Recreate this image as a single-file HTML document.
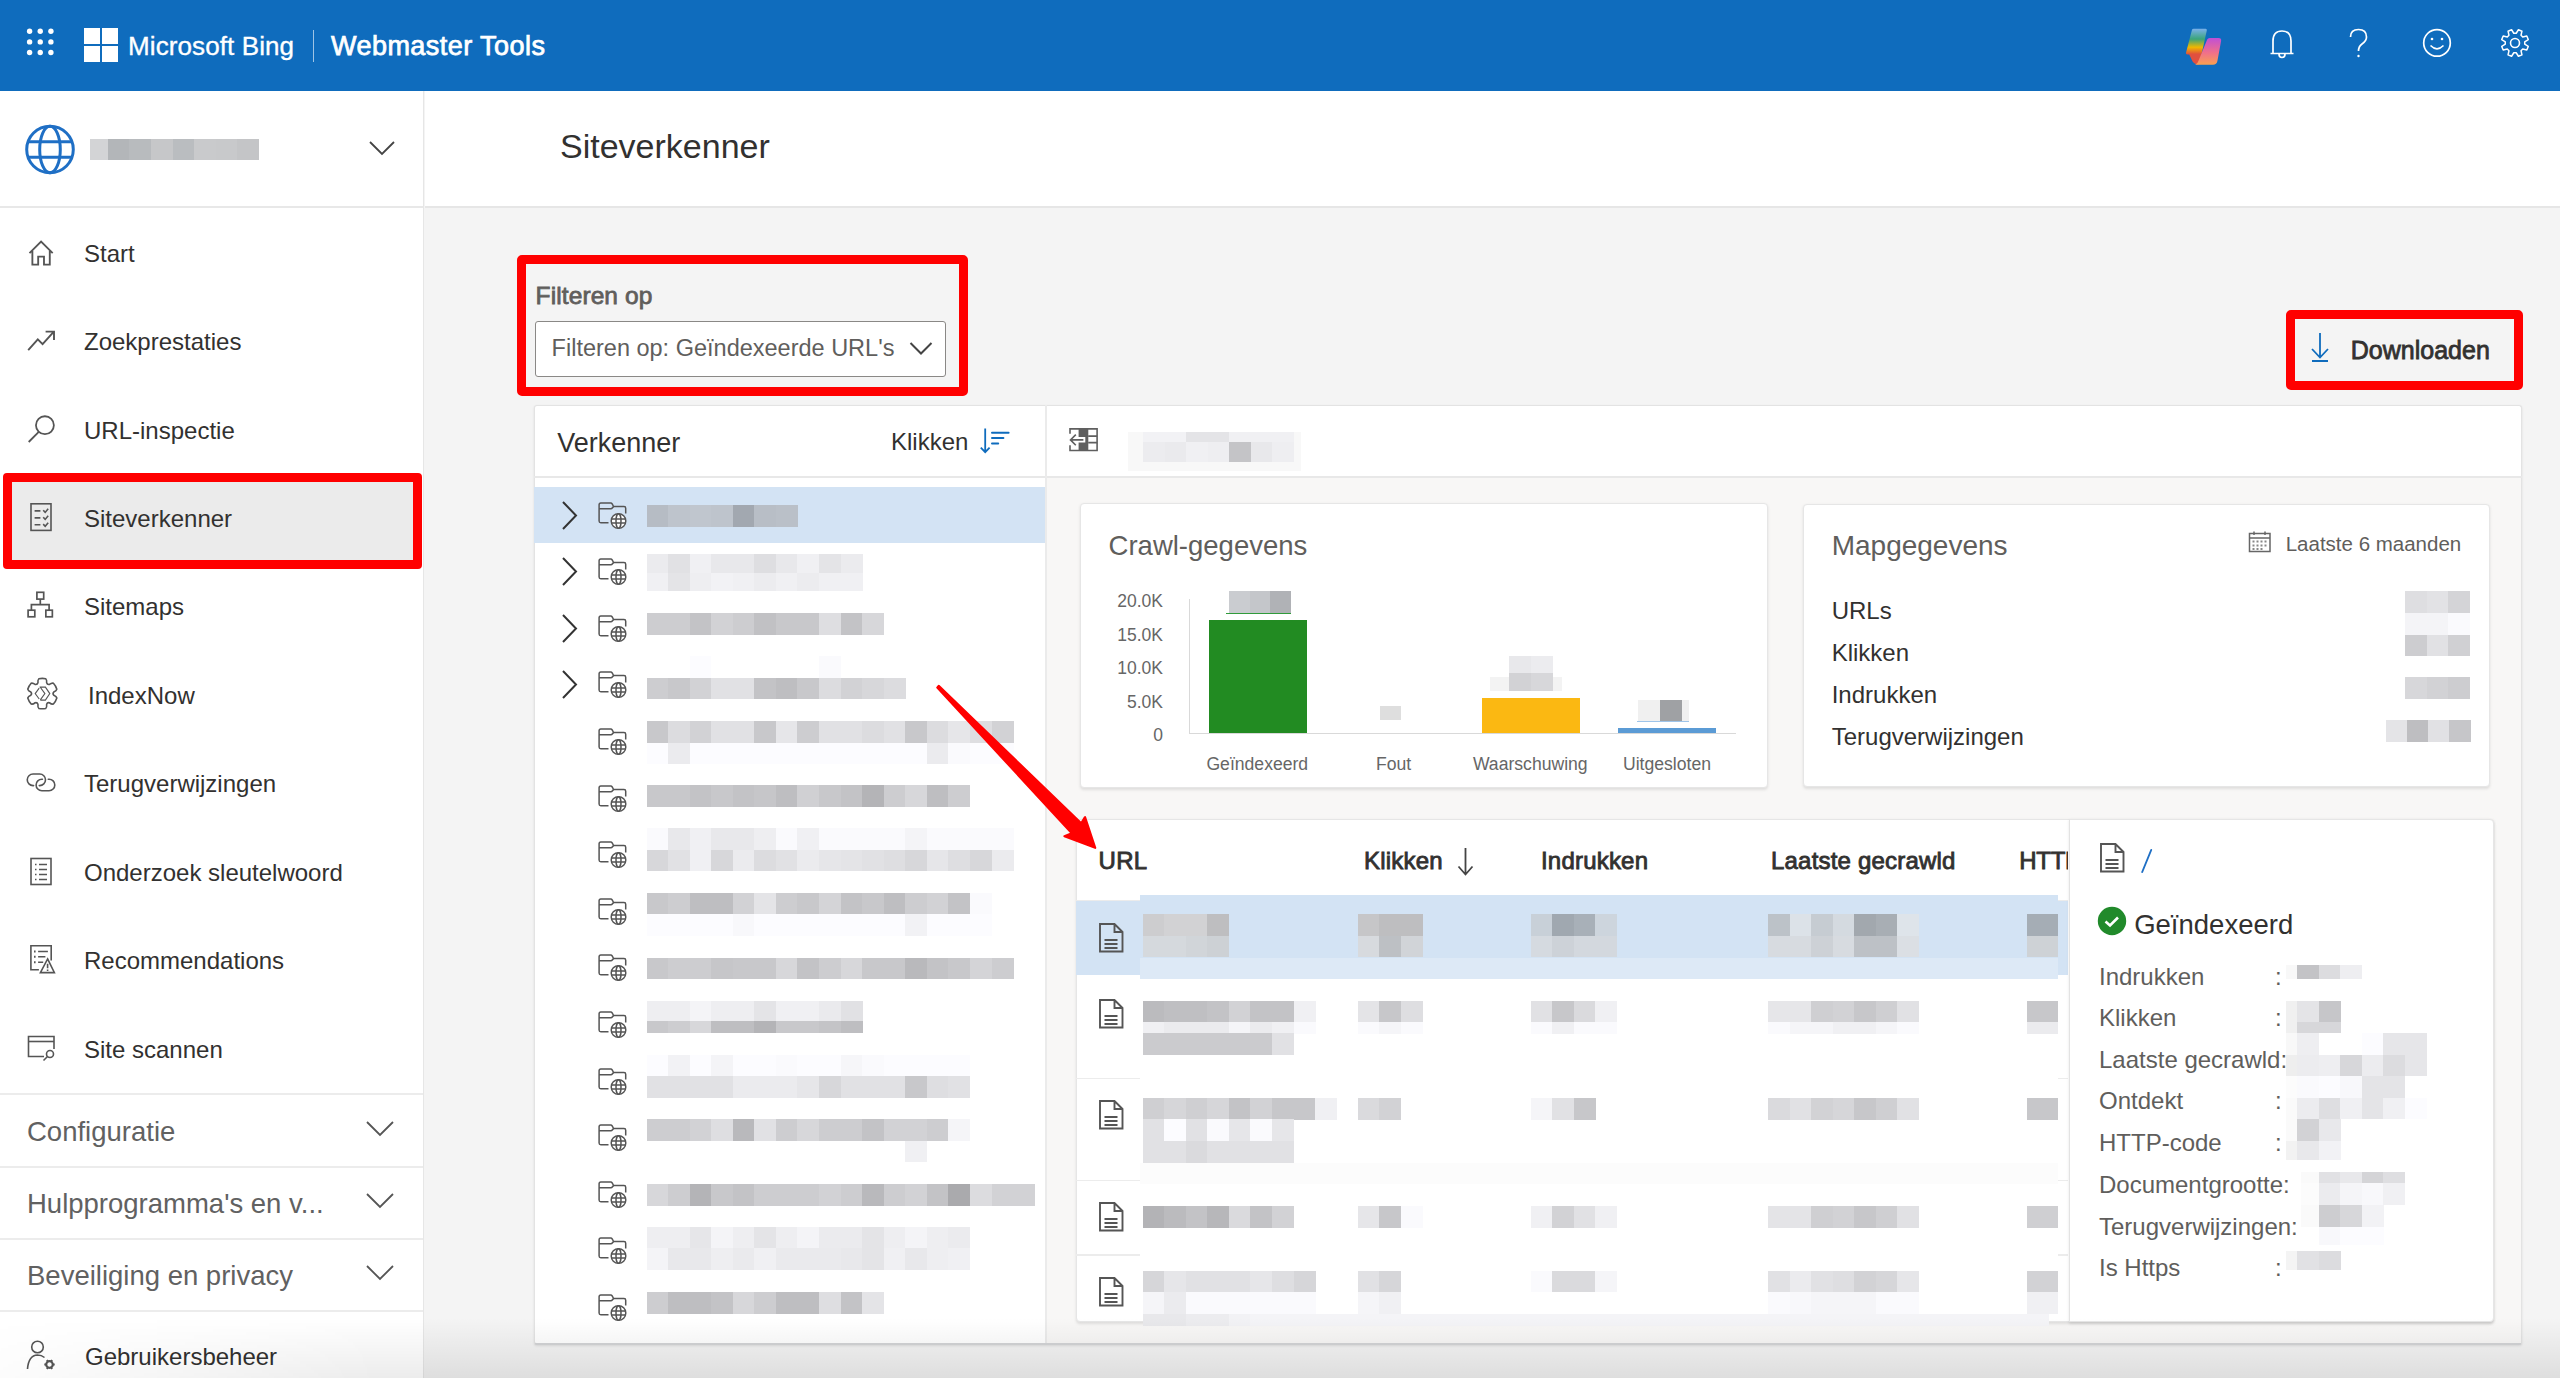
<!DOCTYPE html><html><head><meta charset="utf-8"><style>
html,body{margin:0;padding:0;}
body{width:2560px;height:1378px;overflow:hidden;position:relative;background:#f4f4f4;font-family:"Liberation Sans",sans-serif;}
.t{position:absolute;line-height:1;white-space:nowrap;}
.r{position:absolute;}
svg{position:absolute;overflow:visible;}
</style></head><body>
<div class="r" style="left:0.0px;top:0.0px;width:2560.0px;height:91.0px;background:#0f6cbd;"></div>
<svg style="left:0;top:0" width="80" height="91"><circle cx="29.6" cy="31.25" r="2.7" fill="#fff"/><circle cx="40.25" cy="31.25" r="2.7" fill="#fff"/><circle cx="50.9" cy="31.25" r="2.7" fill="#fff"/><circle cx="29.6" cy="41.9" r="2.7" fill="#fff"/><circle cx="40.25" cy="41.9" r="2.7" fill="#fff"/><circle cx="50.9" cy="41.9" r="2.7" fill="#fff"/><circle cx="29.6" cy="52.5" r="2.7" fill="#fff"/><circle cx="40.25" cy="52.5" r="2.7" fill="#fff"/><circle cx="50.9" cy="52.5" r="2.7" fill="#fff"/></svg>
<div class="r" style="left:84.0px;top:27.8px;width:16.0px;height:16.0px;background:#fff;"></div>
<div class="r" style="left:101.8px;top:27.8px;width:16.0px;height:16.0px;background:#fff;"></div>
<div class="r" style="left:84.0px;top:45.8px;width:16.0px;height:16.0px;background:#fff;"></div>
<div class="r" style="left:101.8px;top:45.8px;width:16.0px;height:16.0px;background:#fff;"></div>
<div class="t" style="left:128px;top:33.4px;font-size:26px;color:#fff;font-weight:400;letter-spacing:0.1px;-webkit-text-stroke:0.35px #fff">Microsoft Bing</div>
<div class="r" style="left:313.2px;top:30.0px;width:1.1px;height:31.5px;background:rgba(255,255,255,0.6);"></div>
<div class="t" style="left:331px;top:32.9px;font-size:27px;color:#fff;font-weight:400;letter-spacing:0.45px;-webkit-text-stroke:0.75px #fff">Webmaster Tools</div>
<svg style="left:2180px;top:24px" width="48" height="46" viewBox="0 0 48 46">
<defs><linearGradient id="cg1" x1="0" y1="0" x2="0" y2="1"><stop offset="0" stop-color="#7ab0ea"/><stop offset="0.4" stop-color="#3aa57a"/><stop offset="0.72" stop-color="#f0b800"/><stop offset="1" stop-color="#e04a3f"/></linearGradient>
<linearGradient id="cg2" x1="0" y1="0" x2="0" y2="1"><stop offset="0" stop-color="#c04fd6"/><stop offset="0.55" stop-color="#f0708a"/><stop offset="1" stop-color="#f8a050"/></linearGradient></defs>
<path d="M12 5.8 Q12.4 4.8 13.6 4.8 H25.6 Q27.2 4.8 26.8 6.4 L21.5 30.5 H7.4 Q5.6 30.5 6 28.7Z" fill="url(#cg1)"/>
<path d="M9 30 H21.6 L18.6 40.8 Q13.5 40.5 11.6 35.5Z" fill="#e0503f"/>
<path d="M27.2 15.6 Q27.9 14 29.6 14 H38.8 Q41.6 14 41.1 17 L37.4 37 Q36.6 40.8 33 40.8 H15.2 Q17.8 39.4 18.6 36.4Z" fill="url(#cg2)"/>
</svg>
<svg style="left:2268px;top:28px" width="28" height="32" viewBox="0 0 28 32"><path d="M5 25 L5 13 Q5 3 14 3 Q23 3 23 13 L23 25 M2.5 25.5 L25.5 25.5 M11 26 Q11 29.5 14 29.5 Q17 29.5 17 26" fill="none" stroke="#fff" stroke-width="1.7"/></svg>
<svg style="left:2346px;top:27px" width="26" height="34" viewBox="0 0 26 34"><path d="M4.5 10 Q4.5 2.5 12.5 2.5 Q20.5 2.5 20.5 10 Q20.5 14 16 17 Q12.5 19.5 12.5 24" fill="none" stroke="#fff" stroke-width="1.7"/><circle cx="12.5" cy="29" r="1.2" fill="#fff"/></svg>
<svg style="left:2420px;top:26px" width="34" height="34" viewBox="0 0 34 34"><circle cx="17" cy="16.9" r="13.3" fill="none" stroke="#fff" stroke-width="1.7"/><circle cx="12" cy="13" r="1.3" fill="#fff"/><circle cx="22" cy="13" r="1.3" fill="#fff"/><path d="M10.5 19.5 Q17 26 23.5 19.5" fill="none" stroke="#fff" stroke-width="1.7"/></svg>
<svg style="left:2498px;top:26px" width="34" height="34" viewBox="0 0 34 34"><path d="M26.73 18.20 L30.26 20.43 L28.80 23.96 L24.73 23.03 L23.03 24.73 L23.96 28.80 L20.43 30.26 L18.20 26.73 L15.80 26.73 L13.57 30.26 L10.04 28.80 L10.97 24.73 L9.27 23.03 L5.20 23.96 L3.74 20.43 L7.27 18.20 L7.27 15.80 L3.74 13.57 L5.20 10.04 L9.27 10.97 L10.97 9.27 L10.04 5.20 L13.57 3.74 L15.80 7.27 L18.20 7.27 L20.43 3.74 L23.96 5.20 L23.03 9.27 L24.73 10.97 L28.80 10.04 L30.26 13.57 L26.73 15.80Z" fill="none" stroke="#fff" stroke-width="1.5" stroke-linejoin="round"/><circle cx="17" cy="17" r="4.5" fill="none" stroke="#fff" stroke-width="1.6"/></svg>
<div class="r" style="left:0.0px;top:91.0px;width:423.0px;height:1287.0px;background:#ffffff;"></div>
<div class="r" style="left:423.0px;top:91.0px;width:1.2px;height:1287.0px;background:#e6e6e6;"></div>
<div class="r" style="left:0.0px;top:206.0px;width:423.0px;height:2.0px;background:#e8e8e8;"></div>
<svg style="left:22px;top:122px" width="56" height="56" viewBox="0 0 56 56"><g fill="none" stroke="#1f6fc5" stroke-width="3"><circle cx="28" cy="27.5" r="23.3"/><ellipse cx="28" cy="27.5" rx="10.3" ry="23.3"/><path d="M6.5 19.8 H49.5 M6.5 35.2 H49.5"/></g></svg>
<div class="r" style="left:90.2px;top:138.6px;width:18.1px;height:21.2px;background:#d3d4d6;"></div>
<div class="r" style="left:108.0px;top:138.6px;width:21.5px;height:21.2px;background:#b3b6b9;"></div>
<div class="r" style="left:129.2px;top:138.6px;width:21.8px;height:21.2px;background:#b8bbbe;"></div>
<div class="r" style="left:150.7px;top:138.6px;width:22.2px;height:21.2px;background:#c6c7c9;"></div>
<div class="r" style="left:172.6px;top:138.6px;width:21.4px;height:21.2px;background:#babdc0;"></div>
<div class="r" style="left:193.7px;top:138.6px;width:22.1px;height:21.2px;background:#c9cacc;"></div>
<div class="r" style="left:215.5px;top:138.6px;width:21.8px;height:21.2px;background:#c8c9cb;"></div>
<div class="r" style="left:237.0px;top:138.6px;width:22.2px;height:21.2px;background:#c4c5c7;"></div>
<svg style="left:368px;top:140px" width="28" height="18" viewBox="0 0 28 18"><path d="M2 2 L14 14 L26 2" fill="none" stroke="#444" stroke-width="1.8"/></svg>
<div class="r" style="left:8.0px;top:479.0px;width:408.0px;height:83.0px;background:#ebebeb;"></div>
<div class="r" style="left:3.0px;top:473.0px;width:419.0px;height:95.5px;background:transparent;border:9.5px solid #ff0000;box-sizing:border-box;border-radius:4px"></div>
<div class="t" style="left:84px;top:242.0px;font-size:24px;color:#323130;font-weight:400;">Start</div>
<div class="t" style="left:84px;top:330.2px;font-size:24px;color:#323130;font-weight:400;">Zoekprestaties</div>
<div class="t" style="left:84px;top:418.5px;font-size:24px;color:#323130;font-weight:400;">URL-inspectie</div>
<div class="t" style="left:84px;top:506.7px;font-size:24px;color:#323130;font-weight:400;">Siteverkenner</div>
<div class="t" style="left:84px;top:595.0px;font-size:24px;color:#323130;font-weight:400;">Sitemaps</div>
<div class="t" style="left:88px;top:683.6px;font-size:24px;color:#323130;font-weight:400;">IndexNow</div>
<div class="t" style="left:84px;top:772.1px;font-size:24px;color:#323130;font-weight:400;">Terugverwijzingen</div>
<div class="t" style="left:84px;top:860.7px;font-size:24px;color:#323130;font-weight:400;">Onderzoek sleutelwoord</div>
<div class="t" style="left:84px;top:949.2px;font-size:24px;color:#323130;font-weight:400;">Recommendations</div>
<div class="t" style="left:84px;top:1037.7px;font-size:24px;color:#323130;font-weight:400;">Site scannen</div>
<svg style="left:20px;top:765px" width="50" height="40" viewBox="0 0 50 40"><g fill="none" stroke="#555" stroke-width="1.6" stroke-linecap="round"><path d="M13.6 20.6 H13.05 A5.8 5.8 0 0 1 13.05 9 H19.7 A5.8 5.8 0 0 1 19.7 20.6 H19.3"/><path d="M22.4 14.2 H21.85 A5.75 5.75 0 0 0 21.85 25.7 H29.05 A5.75 5.75 0 0 0 29.05 14.2 H28.3"/></g></svg>
<svg style="left:20px;top:585px" width="50" height="40" viewBox="0 0 50 40"><g fill="none" stroke="#555" stroke-width="1.7"><rect x="16.9" y="7.3" width="6.8" height="6.8"/><rect x="8.1" y="25.2" width="6.7" height="6.6"/><rect x="25.85" y="25.2" width="6.5" height="6.6"/><path d="M20.3 14.1 V19.6 M11.4 25.2 V19.6 H29.1 V25.2"/></g></svg>
<svg style="left:20px;top:670px" width="50" height="50" viewBox="0 0 50 50"><path d="M17.95 12.84 Q17.61 9.98 18.88 8.79 Q22.30 8.00 25.72 8.79 Q26.99 9.98 26.65 12.84 Q27.30 14.94 29.44 14.46 Q31.75 12.73 33.42 13.23 Q35.81 15.80 36.84 19.16 Q36.44 20.85 33.79 21.99 Q32.30 23.60 33.79 25.21 Q36.44 26.35 36.84 28.04 Q35.81 31.40 33.42 33.97 Q31.75 34.47 29.44 32.74 Q27.30 32.26 26.65 34.36 Q26.99 37.22 25.72 38.41 Q22.30 39.20 18.88 38.41 Q17.61 37.22 17.95 34.36 Q17.30 32.26 15.16 32.74 Q12.85 34.47 11.18 33.97 Q8.79 31.40 7.76 28.04 Q8.16 26.35 10.81 25.21 Q12.30 23.60 10.81 21.99 Q8.16 20.85 7.76 19.16 Q8.79 15.80 11.18 13.23 Q12.85 12.73 15.16 14.46 Q17.30 14.94 17.95 12.84 Z" fill="none" stroke="#555" stroke-width="1.6"/><path d="M19.6 17.1 H25.4 L29.8 23.6 L25.4 30.1 H20.3 M20.3 17.3 L24.9 23.6 L20.3 29.9 M19.2 18.2 L15.2 23.6 L19.2 29" fill="none" stroke="#555" stroke-width="1.1"/></svg>
<svg style="left:25.5px;top:237.5px" width="34" height="34" viewBox="0 0 34 34"><g transform="scale(1.16)"><path d="M3 13 L13 3 L23 13 M5.5 10.5 V23 H10.5 V16 H15.5 V23 H20.5 V10.5" fill="none" stroke="#555" stroke-width="1.6"/></g></svg>
<svg style="left:27px;top:324.5px" width="34" height="34" viewBox="0 0 34 34"><g transform="scale(1.2)"><path d="M1 21 L9 12 L13 16 L22 6 M15.5 5.5 H22.5 V12.5" fill="none" stroke="#555" stroke-width="1.6"/></g></svg>
<svg style="left:26.5px;top:413.5px" width="34" height="34" viewBox="0 0 34 34"><g transform="scale(1.12)"><circle cx="16" cy="10" r="8" fill="none" stroke="#555" stroke-width="1.6"/><path d="M10.5 16 L1.5 25" fill="none" stroke="#555" stroke-width="1.6"/></g></svg>
<svg style="left:28px;top:501px" width="34" height="34" viewBox="0 0 34 34"><g transform="scale(1.0)"><rect x="3" y="2.8" width="20" height="26.6" fill="none" stroke="#555" stroke-width="1.6"/><path d="M6.6 9.9 H12.4 M6.6 16.9 H12.4 M6.6 23.8 H12.4 M15.2 9.2 l2 2.2 l3 -3.6 M15.2 16.2 l2 2.2 l3 -3.6 M15.2 23.1 l2 2.2 l3 -3.6" fill="none" stroke="#555" stroke-width="1.6"/></g></svg>
<svg style="left:28px;top:857px" width="34" height="34" viewBox="0 0 34 34"><g transform="scale(1.0)"><rect x="3" y="1.5" width="20" height="26" fill="none" stroke="#555" stroke-width="1.6"/><path d="M7 7.5 H8.5 M11 7.5 H19 M7 12.5 H8.5 M11 12.5 H19 M7 17.5 H8.5 M11 17.5 H19 M7 22.5 H8.5 M11 22.5 H19" fill="none" stroke="#555" stroke-width="1.6"/></g></svg>
<svg style="left:28px;top:945px" width="34" height="34" viewBox="0 0 34 34"><g transform="scale(1.0)"><path d="M10.9 24.8 H2.9 V0.8 H23.2 V15.4" fill="none" stroke="#555" stroke-width="1.6"/><path d="M10.1 6.5 H19.9 M10.1 11.8 H17.4 M10.1 17.2 H15.2" fill="none" stroke="#555" stroke-width="1.6"/><path d="M6 6.5 H7.6 M6 11.8 H7.6 M6 17.2 H7.6" stroke="#555" stroke-width="2"/><path d="M19.6 13.9 L26.4 27.6 H12.4Z" fill="none" stroke="#555" stroke-width="1.6"/><path d="M19.6 18.8 V23.2 M19.6 24.6 V26" fill="none" stroke="#555" stroke-width="1.6"/></g></svg>
<svg style="left:26.8px;top:1034.6px" width="34" height="34" viewBox="0 0 34 34"><g transform="scale(1.0)"><path d="M17 21.5 H1.5 V1.5 H27 V14" fill="none" stroke="#555" stroke-width="1.6"/><path d="M1.5 6.5 H27" fill="none" stroke="#555" stroke-width="1.6"/><circle cx="23" cy="19" r="3.5" fill="none" stroke="#555" stroke-width="1.6"/><path d="M20.5 21.5 L16.5 25.5" fill="none" stroke="#555" stroke-width="1.6"/></g></svg>
<div class="r" style="left:0.0px;top:1093.0px;width:423.0px;height:2.0px;background:#ececec;"></div>
<div class="r" style="left:0.0px;top:1165.6px;width:423.0px;height:2.0px;background:#ececec;"></div>
<div class="r" style="left:0.0px;top:1237.8px;width:423.0px;height:2.0px;background:#ececec;"></div>
<div class="r" style="left:0.0px;top:1310.0px;width:423.0px;height:2.0px;background:#ececec;"></div>
<div class="t" style="left:27px;top:1117.7px;font-size:27.5px;color:#616161;font-weight:400;">Configuratie</div>
<div class="t" style="left:27px;top:1190.1px;font-size:27.5px;color:#616161;font-weight:400;">Hulpprogramma's en v...</div>
<div class="t" style="left:27px;top:1261.7px;font-size:27.5px;color:#616161;font-weight:400;">Beveiliging en privacy</div>
<svg style="left:364px;top:1120px" width="32" height="20" viewBox="0 0 32 20"><path d="M3 2 L16 15 L29 2" fill="none" stroke="#555" stroke-width="1.8"/></svg>
<svg style="left:364px;top:1192px" width="32" height="20" viewBox="0 0 32 20"><path d="M3 2 L16 15 L29 2" fill="none" stroke="#555" stroke-width="1.8"/></svg>
<svg style="left:364px;top:1264px" width="32" height="20" viewBox="0 0 32 20"><path d="M3 2 L16 15 L29 2" fill="none" stroke="#555" stroke-width="1.8"/></svg>
<div class="t" style="left:85px;top:1345.4px;font-size:24px;color:#323130;font-weight:400;">Gebruikersbeheer</div>
<svg style="left:25px;top:1339px" width="34" height="34" viewBox="0 0 34 34"><circle cx="12.5" cy="8" r="5.8" fill="none" stroke="#555" stroke-width="1.6"/><path d="M2.5 30 Q3.5 16.5 12.5 16 Q16.5 16 19.5 18.5" fill="none" stroke="#555" stroke-width="1.6"/><circle cx="24.5" cy="25.5" r="3.3" fill="none" stroke="#555" stroke-width="2.2"/><path d="M27.10 25.50 L29.70 25.50 M25.80 27.75 L27.10 30.00 M23.20 27.75 L21.90 30.00 M21.90 25.50 L19.30 25.50 M23.20 23.25 L21.90 21.00 M25.80 23.25 L27.10 21.00 " stroke="#555" stroke-width="1.8"/></svg>
<div class="r" style="left:424.5px;top:91.0px;width:2135.5px;height:116.0px;background:#ffffff;"></div>
<div class="r" style="left:424.5px;top:206.0px;width:2135.5px;height:2.0px;background:#e6e6e6;"></div>
<div class="t" style="left:560px;top:129.2px;font-size:34px;color:#323130;font-weight:400;">Siteverkenner</div>
<div class="r" style="left:517.2px;top:255.4px;width:450.5px;height:140.2px;background:transparent;border:9.5px solid #ff0000;box-sizing:border-box;border-radius:5px"></div>
<div class="t" style="left:535.6px;top:284.3px;font-size:24.5px;color:#605e5c;font-weight:400;letter-spacing:0.1px;-webkit-text-stroke:0.8px #605e5c">Filteren op</div>
<div class="r" style="left:534.7px;top:320.6px;width:411.2px;height:56.0px;background:#fff;border:1px solid #8a8886;box-sizing:border-box;border-radius:3px"></div>
<div class="t" style="left:551.6px;top:337.3px;font-size:23.5px;color:#605e5c;font-weight:400;">Filteren op: Geïndexeerde URL's</div>
<svg style="left:906px;top:338px" width="30" height="20" viewBox="0 0 30 20"><path d="M4.5 5 L15 15.5 L25.5 5" fill="none" stroke="#444" stroke-width="2"/></svg>
<div class="r" style="left:2286.0px;top:309.5px;width:237.0px;height:80.3px;background:transparent;border:9.2px solid #ff0000;box-sizing:border-box;border-radius:5px"></div>
<svg style="left:2308px;top:330px" width="26" height="36" viewBox="0 0 26 36"><path d="M12 3 V27 M4 19 L12 27.5 L20 19" fill="none" stroke="#0f6cbd" stroke-width="1.8"/><path d="M4 31 H20" stroke="#0f6cbd" stroke-width="2"/></svg>
<div class="t" style="left:2350.8px;top:338.1px;font-size:25px;color:#323130;font-weight:400;-webkit-text-stroke:0.8px #323130">Downloaden</div>
<div class="r" style="left:534.0px;top:404.5px;width:1988.0px;height:940.0px;background:#ffffff;border:1px solid #e3e3e3;border-bottom:2px solid #d3d4d6;box-sizing:border-box;box-shadow:0 1px 2.5px rgba(0,0,0,0.10);border-radius:3px"></div>
<div class="t" style="left:557.2px;top:429.9px;font-size:27px;color:#323130;font-weight:400;">Verkenner</div>
<div class="t" style="left:891px;top:429.7px;font-size:24px;color:#323130;font-weight:400;">Klikken</div>
<svg style="left:970px;top:420px" width="50" height="40" viewBox="0 0 50 40"><path d="M15.2 8.4 V32 M10.8 27.6 L15.2 32.2 L19.6 27.6" fill="none" stroke="#0f6cbd" stroke-width="1.8"/><path d="M22 12.8 H38.6 M22 18 H33.4 M22 23.4 H28.2" stroke="#0f6cbd" stroke-width="2" stroke-linecap="round"/></svg>
<div class="r" style="left:534.0px;top:476.0px;width:512.0px;height:2.0px;background:#e8e8e8;"></div>
<div class="r" style="left:1045.2px;top:405.0px;width:2.2px;height:937.5px;background:#ebebeb;"></div>
<div class="r" style="left:534.0px;top:486.6px;width:511.0px;height:56.2px;background:#d3e3f4;"></div>
<svg style="left:560px;top:499.5px" width="20" height="32" viewBox="0 0 20 32"><path d="M3 2 L16 15.5 L3 29" fill="none" stroke="#333" stroke-width="2"/></svg>
<svg style="left:598px;top:500.5px" width="34" height="34" viewBox="0 0 34 34"><g fill="none" stroke="#555" stroke-width="1.5"><path d="M10.5 21.7 H2.8 Q1.1 21.7 1.1 20 V3.8 Q1.1 2.1 2.8 2.1 H12.8 Q13.6 2.1 14.2 3 L15.6 5.5 H26 Q27.7 5.5 27.7 7.2 V12.6"/><path d="M1.1 7.7 H12.8 Q13.8 7.7 14.5 6.8 L15.6 5.5"/><circle cx="20.5" cy="20" r="7.3" fill="#fff"/><ellipse cx="20.5" cy="20" rx="2.5" ry="7.3"/><path d="M13.4 18.1 H27.6 M13.4 21.9 H27.6"/></g></svg>
<svg style="left:560px;top:556.1px" width="20" height="32" viewBox="0 0 20 32"><path d="M3 2 L16 15.5 L3 29" fill="none" stroke="#333" stroke-width="2"/></svg>
<svg style="left:598px;top:557.1px" width="34" height="34" viewBox="0 0 34 34"><g fill="none" stroke="#555" stroke-width="1.5"><path d="M10.5 21.7 H2.8 Q1.1 21.7 1.1 20 V3.8 Q1.1 2.1 2.8 2.1 H12.8 Q13.6 2.1 14.2 3 L15.6 5.5 H26 Q27.7 5.5 27.7 7.2 V12.6"/><path d="M1.1 7.7 H12.8 Q13.8 7.7 14.5 6.8 L15.6 5.5"/><circle cx="20.5" cy="20" r="7.3" fill="#fff"/><ellipse cx="20.5" cy="20" rx="2.5" ry="7.3"/><path d="M13.4 18.1 H27.6 M13.4 21.9 H27.6"/></g></svg>
<svg style="left:560px;top:612.7px" width="20" height="32" viewBox="0 0 20 32"><path d="M3 2 L16 15.5 L3 29" fill="none" stroke="#333" stroke-width="2"/></svg>
<svg style="left:598px;top:613.7px" width="34" height="34" viewBox="0 0 34 34"><g fill="none" stroke="#555" stroke-width="1.5"><path d="M10.5 21.7 H2.8 Q1.1 21.7 1.1 20 V3.8 Q1.1 2.1 2.8 2.1 H12.8 Q13.6 2.1 14.2 3 L15.6 5.5 H26 Q27.7 5.5 27.7 7.2 V12.6"/><path d="M1.1 7.7 H12.8 Q13.8 7.7 14.5 6.8 L15.6 5.5"/><circle cx="20.5" cy="20" r="7.3" fill="#fff"/><ellipse cx="20.5" cy="20" rx="2.5" ry="7.3"/><path d="M13.4 18.1 H27.6 M13.4 21.9 H27.6"/></g></svg>
<svg style="left:560px;top:669.3px" width="20" height="32" viewBox="0 0 20 32"><path d="M3 2 L16 15.5 L3 29" fill="none" stroke="#333" stroke-width="2"/></svg>
<svg style="left:598px;top:670.3px" width="34" height="34" viewBox="0 0 34 34"><g fill="none" stroke="#555" stroke-width="1.5"><path d="M10.5 21.7 H2.8 Q1.1 21.7 1.1 20 V3.8 Q1.1 2.1 2.8 2.1 H12.8 Q13.6 2.1 14.2 3 L15.6 5.5 H26 Q27.7 5.5 27.7 7.2 V12.6"/><path d="M1.1 7.7 H12.8 Q13.8 7.7 14.5 6.8 L15.6 5.5"/><circle cx="20.5" cy="20" r="7.3" fill="#fff"/><ellipse cx="20.5" cy="20" rx="2.5" ry="7.3"/><path d="M13.4 18.1 H27.6 M13.4 21.9 H27.6"/></g></svg>
<svg style="left:598px;top:726.9px" width="34" height="34" viewBox="0 0 34 34"><g fill="none" stroke="#555" stroke-width="1.5"><path d="M10.5 21.7 H2.8 Q1.1 21.7 1.1 20 V3.8 Q1.1 2.1 2.8 2.1 H12.8 Q13.6 2.1 14.2 3 L15.6 5.5 H26 Q27.7 5.5 27.7 7.2 V12.6"/><path d="M1.1 7.7 H12.8 Q13.8 7.7 14.5 6.8 L15.6 5.5"/><circle cx="20.5" cy="20" r="7.3" fill="#fff"/><ellipse cx="20.5" cy="20" rx="2.5" ry="7.3"/><path d="M13.4 18.1 H27.6 M13.4 21.9 H27.6"/></g></svg>
<svg style="left:598px;top:783.5px" width="34" height="34" viewBox="0 0 34 34"><g fill="none" stroke="#555" stroke-width="1.5"><path d="M10.5 21.7 H2.8 Q1.1 21.7 1.1 20 V3.8 Q1.1 2.1 2.8 2.1 H12.8 Q13.6 2.1 14.2 3 L15.6 5.5 H26 Q27.7 5.5 27.7 7.2 V12.6"/><path d="M1.1 7.7 H12.8 Q13.8 7.7 14.5 6.8 L15.6 5.5"/><circle cx="20.5" cy="20" r="7.3" fill="#fff"/><ellipse cx="20.5" cy="20" rx="2.5" ry="7.3"/><path d="M13.4 18.1 H27.6 M13.4 21.9 H27.6"/></g></svg>
<svg style="left:598px;top:840.1px" width="34" height="34" viewBox="0 0 34 34"><g fill="none" stroke="#555" stroke-width="1.5"><path d="M10.5 21.7 H2.8 Q1.1 21.7 1.1 20 V3.8 Q1.1 2.1 2.8 2.1 H12.8 Q13.6 2.1 14.2 3 L15.6 5.5 H26 Q27.7 5.5 27.7 7.2 V12.6"/><path d="M1.1 7.7 H12.8 Q13.8 7.7 14.5 6.8 L15.6 5.5"/><circle cx="20.5" cy="20" r="7.3" fill="#fff"/><ellipse cx="20.5" cy="20" rx="2.5" ry="7.3"/><path d="M13.4 18.1 H27.6 M13.4 21.9 H27.6"/></g></svg>
<svg style="left:598px;top:896.7px" width="34" height="34" viewBox="0 0 34 34"><g fill="none" stroke="#555" stroke-width="1.5"><path d="M10.5 21.7 H2.8 Q1.1 21.7 1.1 20 V3.8 Q1.1 2.1 2.8 2.1 H12.8 Q13.6 2.1 14.2 3 L15.6 5.5 H26 Q27.7 5.5 27.7 7.2 V12.6"/><path d="M1.1 7.7 H12.8 Q13.8 7.7 14.5 6.8 L15.6 5.5"/><circle cx="20.5" cy="20" r="7.3" fill="#fff"/><ellipse cx="20.5" cy="20" rx="2.5" ry="7.3"/><path d="M13.4 18.1 H27.6 M13.4 21.9 H27.6"/></g></svg>
<svg style="left:598px;top:953.3px" width="34" height="34" viewBox="0 0 34 34"><g fill="none" stroke="#555" stroke-width="1.5"><path d="M10.5 21.7 H2.8 Q1.1 21.7 1.1 20 V3.8 Q1.1 2.1 2.8 2.1 H12.8 Q13.6 2.1 14.2 3 L15.6 5.5 H26 Q27.7 5.5 27.7 7.2 V12.6"/><path d="M1.1 7.7 H12.8 Q13.8 7.7 14.5 6.8 L15.6 5.5"/><circle cx="20.5" cy="20" r="7.3" fill="#fff"/><ellipse cx="20.5" cy="20" rx="2.5" ry="7.3"/><path d="M13.4 18.1 H27.6 M13.4 21.9 H27.6"/></g></svg>
<svg style="left:598px;top:1009.9000000000001px" width="34" height="34" viewBox="0 0 34 34"><g fill="none" stroke="#555" stroke-width="1.5"><path d="M10.5 21.7 H2.8 Q1.1 21.7 1.1 20 V3.8 Q1.1 2.1 2.8 2.1 H12.8 Q13.6 2.1 14.2 3 L15.6 5.5 H26 Q27.7 5.5 27.7 7.2 V12.6"/><path d="M1.1 7.7 H12.8 Q13.8 7.7 14.5 6.8 L15.6 5.5"/><circle cx="20.5" cy="20" r="7.3" fill="#fff"/><ellipse cx="20.5" cy="20" rx="2.5" ry="7.3"/><path d="M13.4 18.1 H27.6 M13.4 21.9 H27.6"/></g></svg>
<svg style="left:598px;top:1066.5px" width="34" height="34" viewBox="0 0 34 34"><g fill="none" stroke="#555" stroke-width="1.5"><path d="M10.5 21.7 H2.8 Q1.1 21.7 1.1 20 V3.8 Q1.1 2.1 2.8 2.1 H12.8 Q13.6 2.1 14.2 3 L15.6 5.5 H26 Q27.7 5.5 27.7 7.2 V12.6"/><path d="M1.1 7.7 H12.8 Q13.8 7.7 14.5 6.8 L15.6 5.5"/><circle cx="20.5" cy="20" r="7.3" fill="#fff"/><ellipse cx="20.5" cy="20" rx="2.5" ry="7.3"/><path d="M13.4 18.1 H27.6 M13.4 21.9 H27.6"/></g></svg>
<svg style="left:598px;top:1123.1px" width="34" height="34" viewBox="0 0 34 34"><g fill="none" stroke="#555" stroke-width="1.5"><path d="M10.5 21.7 H2.8 Q1.1 21.7 1.1 20 V3.8 Q1.1 2.1 2.8 2.1 H12.8 Q13.6 2.1 14.2 3 L15.6 5.5 H26 Q27.7 5.5 27.7 7.2 V12.6"/><path d="M1.1 7.7 H12.8 Q13.8 7.7 14.5 6.8 L15.6 5.5"/><circle cx="20.5" cy="20" r="7.3" fill="#fff"/><ellipse cx="20.5" cy="20" rx="2.5" ry="7.3"/><path d="M13.4 18.1 H27.6 M13.4 21.9 H27.6"/></g></svg>
<svg style="left:598px;top:1179.7px" width="34" height="34" viewBox="0 0 34 34"><g fill="none" stroke="#555" stroke-width="1.5"><path d="M10.5 21.7 H2.8 Q1.1 21.7 1.1 20 V3.8 Q1.1 2.1 2.8 2.1 H12.8 Q13.6 2.1 14.2 3 L15.6 5.5 H26 Q27.7 5.5 27.7 7.2 V12.6"/><path d="M1.1 7.7 H12.8 Q13.8 7.7 14.5 6.8 L15.6 5.5"/><circle cx="20.5" cy="20" r="7.3" fill="#fff"/><ellipse cx="20.5" cy="20" rx="2.5" ry="7.3"/><path d="M13.4 18.1 H27.6 M13.4 21.9 H27.6"/></g></svg>
<svg style="left:598px;top:1236.3000000000002px" width="34" height="34" viewBox="0 0 34 34"><g fill="none" stroke="#555" stroke-width="1.5"><path d="M10.5 21.7 H2.8 Q1.1 21.7 1.1 20 V3.8 Q1.1 2.1 2.8 2.1 H12.8 Q13.6 2.1 14.2 3 L15.6 5.5 H26 Q27.7 5.5 27.7 7.2 V12.6"/><path d="M1.1 7.7 H12.8 Q13.8 7.7 14.5 6.8 L15.6 5.5"/><circle cx="20.5" cy="20" r="7.3" fill="#fff"/><ellipse cx="20.5" cy="20" rx="2.5" ry="7.3"/><path d="M13.4 18.1 H27.6 M13.4 21.9 H27.6"/></g></svg>
<svg style="left:598px;top:1292.9px" width="34" height="34" viewBox="0 0 34 34"><g fill="none" stroke="#555" stroke-width="1.5"><path d="M10.5 21.7 H2.8 Q1.1 21.7 1.1 20 V3.8 Q1.1 2.1 2.8 2.1 H12.8 Q13.6 2.1 14.2 3 L15.6 5.5 H26 Q27.7 5.5 27.7 7.2 V12.6"/><path d="M1.1 7.7 H12.8 Q13.8 7.7 14.5 6.8 L15.6 5.5"/><circle cx="20.5" cy="20" r="7.3" fill="#fff"/><ellipse cx="20.5" cy="20" rx="2.5" ry="7.3"/><path d="M13.4 18.1 H27.6 M13.4 21.9 H27.6"/></g></svg>
<div class="r" style="left:646.5px;top:505.0px;width:22.1px;height:21.9px;background:rgb(182,188,196);"></div>
<div class="r" style="left:668.1px;top:505.0px;width:22.1px;height:21.9px;background:rgb(190,196,204);"></div>
<div class="r" style="left:689.6px;top:505.0px;width:22.1px;height:21.9px;background:rgb(192,198,206);"></div>
<div class="r" style="left:711.2px;top:505.0px;width:22.1px;height:21.9px;background:rgb(190,196,204);"></div>
<div class="r" style="left:732.7px;top:505.0px;width:22.1px;height:21.9px;background:rgb(162,168,176);"></div>
<div class="r" style="left:754.3px;top:505.0px;width:22.1px;height:21.9px;background:rgb(184,190,198);"></div>
<div class="r" style="left:775.9px;top:505.0px;width:22.1px;height:21.9px;background:rgb(186,192,200);"></div>
<div class="r" style="left:646.5px;top:554.0px;width:22.1px;height:18.8px;background:rgb(235,235,238);"></div>
<div class="r" style="left:668.1px;top:554.0px;width:22.1px;height:18.8px;background:rgb(225,225,228);"></div>
<div class="r" style="left:689.6px;top:554.0px;width:22.1px;height:18.8px;background:rgb(240,240,243);"></div>
<div class="r" style="left:711.2px;top:554.0px;width:22.1px;height:18.8px;background:rgb(232,232,235);"></div>
<div class="r" style="left:732.7px;top:554.0px;width:22.1px;height:18.8px;background:rgb(232,232,235);"></div>
<div class="r" style="left:754.3px;top:554.0px;width:22.1px;height:18.8px;background:rgb(222,222,225);"></div>
<div class="r" style="left:775.9px;top:554.0px;width:22.1px;height:18.8px;background:rgb(232,232,235);"></div>
<div class="r" style="left:797.4px;top:554.0px;width:22.1px;height:18.8px;background:rgb(240,240,243);"></div>
<div class="r" style="left:819.0px;top:554.0px;width:22.1px;height:18.8px;background:rgb(228,228,231);"></div>
<div class="r" style="left:840.5px;top:554.0px;width:22.1px;height:18.8px;background:rgb(235,235,238);"></div>
<div class="r" style="left:646.5px;top:572.5px;width:22.1px;height:18.8px;background:rgb(240,240,243);"></div>
<div class="r" style="left:668.1px;top:572.5px;width:22.1px;height:18.8px;background:rgb(228,228,231);"></div>
<div class="r" style="left:689.6px;top:572.5px;width:22.1px;height:18.8px;background:rgb(238,238,241);"></div>
<div class="r" style="left:711.2px;top:572.5px;width:22.1px;height:18.8px;background:rgb(242,242,245);"></div>
<div class="r" style="left:732.7px;top:572.5px;width:22.1px;height:18.8px;background:rgb(240,240,243);"></div>
<div class="r" style="left:754.3px;top:572.5px;width:22.1px;height:18.8px;background:rgb(236,236,239);"></div>
<div class="r" style="left:775.9px;top:572.5px;width:22.1px;height:18.8px;background:rgb(240,240,243);"></div>
<div class="r" style="left:797.4px;top:572.5px;width:22.1px;height:18.8px;background:rgb(236,236,239);"></div>
<div class="r" style="left:819.0px;top:572.5px;width:22.1px;height:18.8px;background:rgb(240,240,243);"></div>
<div class="r" style="left:840.5px;top:572.5px;width:22.1px;height:18.8px;background:rgb(240,240,243);"></div>
<div class="r" style="left:646.5px;top:613.0px;width:22.1px;height:21.9px;background:rgb(205,205,208);"></div>
<div class="r" style="left:668.1px;top:613.0px;width:22.1px;height:21.9px;background:rgb(205,205,208);"></div>
<div class="r" style="left:689.6px;top:613.0px;width:22.1px;height:21.9px;background:rgb(195,195,198);"></div>
<div class="r" style="left:711.2px;top:613.0px;width:22.1px;height:21.9px;background:rgb(210,210,213);"></div>
<div class="r" style="left:732.7px;top:613.0px;width:22.1px;height:21.9px;background:rgb(205,205,208);"></div>
<div class="r" style="left:754.3px;top:613.0px;width:22.1px;height:21.9px;background:rgb(193,193,196);"></div>
<div class="r" style="left:775.9px;top:613.0px;width:22.1px;height:21.9px;background:rgb(200,200,203);"></div>
<div class="r" style="left:797.4px;top:613.0px;width:22.1px;height:21.9px;background:rgb(200,200,203);"></div>
<div class="r" style="left:819.0px;top:613.0px;width:22.1px;height:21.9px;background:rgb(222,222,225);"></div>
<div class="r" style="left:840.5px;top:613.0px;width:22.1px;height:21.9px;background:rgb(195,195,198);"></div>
<div class="r" style="left:862.1px;top:613.0px;width:22.1px;height:21.9px;background:rgb(215,215,218);"></div>
<div class="r" style="left:646.5px;top:656.2px;width:22.1px;height:21.9px;background:rgb(255,255,255);"></div>
<div class="r" style="left:668.1px;top:656.2px;width:22.1px;height:21.9px;background:rgb(255,255,255);"></div>
<div class="r" style="left:689.6px;top:656.2px;width:22.1px;height:21.9px;background:rgb(252,252,255);"></div>
<div class="r" style="left:711.2px;top:656.2px;width:22.1px;height:21.9px;background:rgb(255,255,255);"></div>
<div class="r" style="left:732.7px;top:656.2px;width:22.1px;height:21.9px;background:rgb(255,255,255);"></div>
<div class="r" style="left:754.3px;top:656.2px;width:22.1px;height:21.9px;background:rgb(255,255,255);"></div>
<div class="r" style="left:775.9px;top:656.2px;width:22.1px;height:21.9px;background:rgb(255,255,255);"></div>
<div class="r" style="left:797.4px;top:656.2px;width:22.1px;height:21.9px;background:rgb(255,255,255);"></div>
<div class="r" style="left:819.0px;top:656.2px;width:22.1px;height:21.9px;background:rgb(250,250,253);"></div>
<div class="r" style="left:840.5px;top:656.2px;width:22.1px;height:21.9px;background:rgb(255,255,255);"></div>
<div class="r" style="left:862.1px;top:656.2px;width:22.1px;height:21.9px;background:rgb(255,255,255);"></div>
<div class="r" style="left:883.7px;top:656.2px;width:22.1px;height:21.9px;background:rgb(255,255,255);"></div>
<div class="r" style="left:646.5px;top:677.6px;width:22.1px;height:21.9px;background:rgb(205,205,208);"></div>
<div class="r" style="left:668.1px;top:677.6px;width:22.1px;height:21.9px;background:rgb(200,200,203);"></div>
<div class="r" style="left:689.6px;top:677.6px;width:22.1px;height:21.9px;background:rgb(210,210,213);"></div>
<div class="r" style="left:711.2px;top:677.6px;width:22.1px;height:21.9px;background:rgb(225,225,228);"></div>
<div class="r" style="left:732.7px;top:677.6px;width:22.1px;height:21.9px;background:rgb(225,225,228);"></div>
<div class="r" style="left:754.3px;top:677.6px;width:22.1px;height:21.9px;background:rgb(195,195,198);"></div>
<div class="r" style="left:775.9px;top:677.6px;width:22.1px;height:21.9px;background:rgb(190,190,193);"></div>
<div class="r" style="left:797.4px;top:677.6px;width:22.1px;height:21.9px;background:rgb(200,200,203);"></div>
<div class="r" style="left:819.0px;top:677.6px;width:22.1px;height:21.9px;background:rgb(220,220,223);"></div>
<div class="r" style="left:840.5px;top:677.6px;width:22.1px;height:21.9px;background:rgb(210,210,213);"></div>
<div class="r" style="left:862.1px;top:677.6px;width:22.1px;height:21.9px;background:rgb(215,215,218);"></div>
<div class="r" style="left:883.7px;top:677.6px;width:22.1px;height:21.9px;background:rgb(220,220,223);"></div>
<div class="r" style="left:646.5px;top:721.0px;width:22.1px;height:21.9px;background:rgb(200,200,203);"></div>
<div class="r" style="left:668.1px;top:721.0px;width:22.1px;height:21.9px;background:rgb(220,220,223);"></div>
<div class="r" style="left:689.6px;top:721.0px;width:22.1px;height:21.9px;background:rgb(210,210,213);"></div>
<div class="r" style="left:711.2px;top:721.0px;width:22.1px;height:21.9px;background:rgb(225,225,228);"></div>
<div class="r" style="left:732.7px;top:721.0px;width:22.1px;height:21.9px;background:rgb(225,225,228);"></div>
<div class="r" style="left:754.3px;top:721.0px;width:22.1px;height:21.9px;background:rgb(200,200,203);"></div>
<div class="r" style="left:775.9px;top:721.0px;width:22.1px;height:21.9px;background:rgb(230,230,233);"></div>
<div class="r" style="left:797.4px;top:721.0px;width:22.1px;height:21.9px;background:rgb(205,205,208);"></div>
<div class="r" style="left:819.0px;top:721.0px;width:22.1px;height:21.9px;background:rgb(225,225,228);"></div>
<div class="r" style="left:840.5px;top:721.0px;width:22.1px;height:21.9px;background:rgb(225,225,228);"></div>
<div class="r" style="left:862.1px;top:721.0px;width:22.1px;height:21.9px;background:rgb(220,220,223);"></div>
<div class="r" style="left:883.7px;top:721.0px;width:22.1px;height:21.9px;background:rgb(225,225,228);"></div>
<div class="r" style="left:905.2px;top:721.0px;width:22.1px;height:21.9px;background:rgb(200,200,203);"></div>
<div class="r" style="left:926.8px;top:721.0px;width:22.1px;height:21.9px;background:rgb(220,220,223);"></div>
<div class="r" style="left:948.3px;top:721.0px;width:22.1px;height:21.9px;background:rgb(230,230,233);"></div>
<div class="r" style="left:969.9px;top:721.0px;width:22.1px;height:21.9px;background:rgb(222,222,225);"></div>
<div class="r" style="left:991.5px;top:721.0px;width:22.1px;height:21.9px;background:rgb(210,210,213);"></div>
<div class="r" style="left:646.5px;top:742.5px;width:22.1px;height:21.9px;background:rgb(252,252,255);"></div>
<div class="r" style="left:668.1px;top:742.5px;width:22.1px;height:21.9px;background:rgb(235,235,238);"></div>
<div class="r" style="left:689.6px;top:742.5px;width:22.1px;height:21.9px;background:rgb(252,252,255);"></div>
<div class="r" style="left:711.2px;top:742.5px;width:22.1px;height:21.9px;background:rgb(252,252,255);"></div>
<div class="r" style="left:732.7px;top:742.5px;width:22.1px;height:21.9px;background:rgb(252,252,255);"></div>
<div class="r" style="left:754.3px;top:742.5px;width:22.1px;height:21.9px;background:rgb(252,252,255);"></div>
<div class="r" style="left:775.9px;top:742.5px;width:22.1px;height:21.9px;background:rgb(252,252,255);"></div>
<div class="r" style="left:797.4px;top:742.5px;width:22.1px;height:21.9px;background:rgb(252,252,255);"></div>
<div class="r" style="left:819.0px;top:742.5px;width:22.1px;height:21.9px;background:rgb(252,252,255);"></div>
<div class="r" style="left:840.5px;top:742.5px;width:22.1px;height:21.9px;background:rgb(252,252,255);"></div>
<div class="r" style="left:862.1px;top:742.5px;width:22.1px;height:21.9px;background:rgb(252,252,255);"></div>
<div class="r" style="left:883.7px;top:742.5px;width:22.1px;height:21.9px;background:rgb(252,252,255);"></div>
<div class="r" style="left:905.2px;top:742.5px;width:22.1px;height:21.9px;background:rgb(252,252,255);"></div>
<div class="r" style="left:926.8px;top:742.5px;width:22.1px;height:21.9px;background:rgb(235,235,238);"></div>
<div class="r" style="left:948.3px;top:742.5px;width:22.1px;height:21.9px;background:rgb(250,250,253);"></div>
<div class="r" style="left:969.9px;top:742.5px;width:22.1px;height:21.9px;background:rgb(252,252,255);"></div>
<div class="r" style="left:991.5px;top:742.5px;width:22.1px;height:21.9px;background:rgb(252,252,255);"></div>
<div class="r" style="left:646.5px;top:785.0px;width:22.1px;height:21.9px;background:rgb(200,200,203);"></div>
<div class="r" style="left:668.1px;top:785.0px;width:22.1px;height:21.9px;background:rgb(200,200,203);"></div>
<div class="r" style="left:689.6px;top:785.0px;width:22.1px;height:21.9px;background:rgb(195,195,198);"></div>
<div class="r" style="left:711.2px;top:785.0px;width:22.1px;height:21.9px;background:rgb(200,200,203);"></div>
<div class="r" style="left:732.7px;top:785.0px;width:22.1px;height:21.9px;background:rgb(195,195,198);"></div>
<div class="r" style="left:754.3px;top:785.0px;width:22.1px;height:21.9px;background:rgb(198,198,201);"></div>
<div class="r" style="left:775.9px;top:785.0px;width:22.1px;height:21.9px;background:rgb(190,190,193);"></div>
<div class="r" style="left:797.4px;top:785.0px;width:22.1px;height:21.9px;background:rgb(208,208,211);"></div>
<div class="r" style="left:819.0px;top:785.0px;width:22.1px;height:21.9px;background:rgb(200,200,203);"></div>
<div class="r" style="left:840.5px;top:785.0px;width:22.1px;height:21.9px;background:rgb(195,195,198);"></div>
<div class="r" style="left:862.1px;top:785.0px;width:22.1px;height:21.9px;background:rgb(180,180,183);"></div>
<div class="r" style="left:883.7px;top:785.0px;width:22.1px;height:21.9px;background:rgb(205,205,208);"></div>
<div class="r" style="left:905.2px;top:785.0px;width:22.1px;height:21.9px;background:rgb(215,215,218);"></div>
<div class="r" style="left:926.8px;top:785.0px;width:22.1px;height:21.9px;background:rgb(190,190,193);"></div>
<div class="r" style="left:948.3px;top:785.0px;width:22.1px;height:21.9px;background:rgb(205,205,208);"></div>
<div class="r" style="left:646.5px;top:828.0px;width:22.1px;height:21.9px;background:rgb(250,250,253);"></div>
<div class="r" style="left:668.1px;top:828.0px;width:22.1px;height:21.9px;background:rgb(232,232,235);"></div>
<div class="r" style="left:689.6px;top:828.0px;width:22.1px;height:21.9px;background:rgb(240,240,243);"></div>
<div class="r" style="left:711.2px;top:828.0px;width:22.1px;height:21.9px;background:rgb(232,232,235);"></div>
<div class="r" style="left:732.7px;top:828.0px;width:22.1px;height:21.9px;background:rgb(232,232,235);"></div>
<div class="r" style="left:754.3px;top:828.0px;width:22.1px;height:21.9px;background:rgb(238,238,241);"></div>
<div class="r" style="left:775.9px;top:828.0px;width:22.1px;height:21.9px;background:rgb(250,250,253);"></div>
<div class="r" style="left:797.4px;top:828.0px;width:22.1px;height:21.9px;background:rgb(240,240,243);"></div>
<div class="r" style="left:819.0px;top:828.0px;width:22.1px;height:21.9px;background:rgb(250,250,253);"></div>
<div class="r" style="left:840.5px;top:828.0px;width:22.1px;height:21.9px;background:rgb(250,250,253);"></div>
<div class="r" style="left:862.1px;top:828.0px;width:22.1px;height:21.9px;background:rgb(250,250,253);"></div>
<div class="r" style="left:883.7px;top:828.0px;width:22.1px;height:21.9px;background:rgb(250,250,253);"></div>
<div class="r" style="left:905.2px;top:828.0px;width:22.1px;height:21.9px;background:rgb(244,244,247);"></div>
<div class="r" style="left:926.8px;top:828.0px;width:22.1px;height:21.9px;background:rgb(250,250,253);"></div>
<div class="r" style="left:948.3px;top:828.0px;width:22.1px;height:21.9px;background:rgb(250,250,253);"></div>
<div class="r" style="left:969.9px;top:828.0px;width:22.1px;height:21.9px;background:rgb(250,250,253);"></div>
<div class="r" style="left:991.5px;top:828.0px;width:22.1px;height:21.9px;background:rgb(250,250,253);"></div>
<div class="r" style="left:646.5px;top:849.5px;width:22.1px;height:21.9px;background:rgb(215,215,218);"></div>
<div class="r" style="left:668.1px;top:849.5px;width:22.1px;height:21.9px;background:rgb(225,225,228);"></div>
<div class="r" style="left:689.6px;top:849.5px;width:22.1px;height:21.9px;background:rgb(240,240,243);"></div>
<div class="r" style="left:711.2px;top:849.5px;width:22.1px;height:21.9px;background:rgb(215,215,218);"></div>
<div class="r" style="left:732.7px;top:849.5px;width:22.1px;height:21.9px;background:rgb(235,235,238);"></div>
<div class="r" style="left:754.3px;top:849.5px;width:22.1px;height:21.9px;background:rgb(220,220,223);"></div>
<div class="r" style="left:775.9px;top:849.5px;width:22.1px;height:21.9px;background:rgb(225,225,228);"></div>
<div class="r" style="left:797.4px;top:849.5px;width:22.1px;height:21.9px;background:rgb(235,235,238);"></div>
<div class="r" style="left:819.0px;top:849.5px;width:22.1px;height:21.9px;background:rgb(230,230,233);"></div>
<div class="r" style="left:840.5px;top:849.5px;width:22.1px;height:21.9px;background:rgb(228,228,231);"></div>
<div class="r" style="left:862.1px;top:849.5px;width:22.1px;height:21.9px;background:rgb(225,225,228);"></div>
<div class="r" style="left:883.7px;top:849.5px;width:22.1px;height:21.9px;background:rgb(222,222,225);"></div>
<div class="r" style="left:905.2px;top:849.5px;width:22.1px;height:21.9px;background:rgb(215,215,218);"></div>
<div class="r" style="left:926.8px;top:849.5px;width:22.1px;height:21.9px;background:rgb(230,230,233);"></div>
<div class="r" style="left:948.3px;top:849.5px;width:22.1px;height:21.9px;background:rgb(222,222,225);"></div>
<div class="r" style="left:969.9px;top:849.5px;width:22.1px;height:21.9px;background:rgb(215,215,218);"></div>
<div class="r" style="left:991.5px;top:849.5px;width:22.1px;height:21.9px;background:rgb(235,235,238);"></div>
<div class="r" style="left:646.5px;top:892.5px;width:22.1px;height:21.9px;background:rgb(200,200,203);"></div>
<div class="r" style="left:668.1px;top:892.5px;width:22.1px;height:21.9px;background:rgb(205,205,208);"></div>
<div class="r" style="left:689.6px;top:892.5px;width:22.1px;height:21.9px;background:rgb(190,190,193);"></div>
<div class="r" style="left:711.2px;top:892.5px;width:22.1px;height:21.9px;background:rgb(190,190,193);"></div>
<div class="r" style="left:732.7px;top:892.5px;width:22.1px;height:21.9px;background:rgb(210,210,213);"></div>
<div class="r" style="left:754.3px;top:892.5px;width:22.1px;height:21.9px;background:rgb(228,228,231);"></div>
<div class="r" style="left:775.9px;top:892.5px;width:22.1px;height:21.9px;background:rgb(205,205,208);"></div>
<div class="r" style="left:797.4px;top:892.5px;width:22.1px;height:21.9px;background:rgb(200,200,203);"></div>
<div class="r" style="left:819.0px;top:892.5px;width:22.1px;height:21.9px;background:rgb(212,212,215);"></div>
<div class="r" style="left:840.5px;top:892.5px;width:22.1px;height:21.9px;background:rgb(195,195,198);"></div>
<div class="r" style="left:862.1px;top:892.5px;width:22.1px;height:21.9px;background:rgb(200,200,203);"></div>
<div class="r" style="left:883.7px;top:892.5px;width:22.1px;height:21.9px;background:rgb(190,190,193);"></div>
<div class="r" style="left:905.2px;top:892.5px;width:22.1px;height:21.9px;background:rgb(205,205,208);"></div>
<div class="r" style="left:926.8px;top:892.5px;width:22.1px;height:21.9px;background:rgb(210,210,213);"></div>
<div class="r" style="left:948.3px;top:892.5px;width:22.1px;height:21.9px;background:rgb(195,195,198);"></div>
<div class="r" style="left:969.9px;top:892.5px;width:22.1px;height:21.9px;background:rgb(250,250,253);"></div>
<div class="r" style="left:646.5px;top:914.0px;width:22.1px;height:21.9px;background:rgb(252,252,255);"></div>
<div class="r" style="left:668.1px;top:914.0px;width:22.1px;height:21.9px;background:rgb(252,252,255);"></div>
<div class="r" style="left:689.6px;top:914.0px;width:22.1px;height:21.9px;background:rgb(252,252,255);"></div>
<div class="r" style="left:711.2px;top:914.0px;width:22.1px;height:21.9px;background:rgb(252,252,255);"></div>
<div class="r" style="left:732.7px;top:914.0px;width:22.1px;height:21.9px;background:rgb(248,248,251);"></div>
<div class="r" style="left:754.3px;top:914.0px;width:22.1px;height:21.9px;background:rgb(252,252,255);"></div>
<div class="r" style="left:775.9px;top:914.0px;width:22.1px;height:21.9px;background:rgb(252,252,255);"></div>
<div class="r" style="left:797.4px;top:914.0px;width:22.1px;height:21.9px;background:rgb(252,252,255);"></div>
<div class="r" style="left:819.0px;top:914.0px;width:22.1px;height:21.9px;background:rgb(252,252,255);"></div>
<div class="r" style="left:840.5px;top:914.0px;width:22.1px;height:21.9px;background:rgb(252,252,255);"></div>
<div class="r" style="left:862.1px;top:914.0px;width:22.1px;height:21.9px;background:rgb(252,252,255);"></div>
<div class="r" style="left:883.7px;top:914.0px;width:22.1px;height:21.9px;background:rgb(252,252,255);"></div>
<div class="r" style="left:905.2px;top:914.0px;width:22.1px;height:21.9px;background:rgb(242,242,245);"></div>
<div class="r" style="left:926.8px;top:914.0px;width:22.1px;height:21.9px;background:rgb(252,252,255);"></div>
<div class="r" style="left:948.3px;top:914.0px;width:22.1px;height:21.9px;background:rgb(252,252,255);"></div>
<div class="r" style="left:969.9px;top:914.0px;width:22.1px;height:21.9px;background:rgb(252,252,255);"></div>
<div class="r" style="left:646.5px;top:957.5px;width:22.1px;height:21.9px;background:rgb(200,200,203);"></div>
<div class="r" style="left:668.1px;top:957.5px;width:22.1px;height:21.9px;background:rgb(205,205,208);"></div>
<div class="r" style="left:689.6px;top:957.5px;width:22.1px;height:21.9px;background:rgb(205,205,208);"></div>
<div class="r" style="left:711.2px;top:957.5px;width:22.1px;height:21.9px;background:rgb(198,198,201);"></div>
<div class="r" style="left:732.7px;top:957.5px;width:22.1px;height:21.9px;background:rgb(200,200,203);"></div>
<div class="r" style="left:754.3px;top:957.5px;width:22.1px;height:21.9px;background:rgb(200,200,203);"></div>
<div class="r" style="left:775.9px;top:957.5px;width:22.1px;height:21.9px;background:rgb(215,215,218);"></div>
<div class="r" style="left:797.4px;top:957.5px;width:22.1px;height:21.9px;background:rgb(195,195,198);"></div>
<div class="r" style="left:819.0px;top:957.5px;width:22.1px;height:21.9px;background:rgb(205,205,208);"></div>
<div class="r" style="left:840.5px;top:957.5px;width:22.1px;height:21.9px;background:rgb(215,215,218);"></div>
<div class="r" style="left:862.1px;top:957.5px;width:22.1px;height:21.9px;background:rgb(200,200,203);"></div>
<div class="r" style="left:883.7px;top:957.5px;width:22.1px;height:21.9px;background:rgb(200,200,203);"></div>
<div class="r" style="left:905.2px;top:957.5px;width:22.1px;height:21.9px;background:rgb(185,185,188);"></div>
<div class="r" style="left:926.8px;top:957.5px;width:22.1px;height:21.9px;background:rgb(195,195,198);"></div>
<div class="r" style="left:948.3px;top:957.5px;width:22.1px;height:21.9px;background:rgb(200,200,203);"></div>
<div class="r" style="left:969.9px;top:957.5px;width:22.1px;height:21.9px;background:rgb(212,212,215);"></div>
<div class="r" style="left:991.5px;top:957.5px;width:22.1px;height:21.9px;background:rgb(205,205,208);"></div>
<div class="r" style="left:646.5px;top:1000.6px;width:22.1px;height:21.1px;background:rgb(238,238,241);"></div>
<div class="r" style="left:668.1px;top:1000.6px;width:22.1px;height:21.1px;background:rgb(238,238,241);"></div>
<div class="r" style="left:689.6px;top:1000.6px;width:22.1px;height:21.1px;background:rgb(244,244,247);"></div>
<div class="r" style="left:711.2px;top:1000.6px;width:22.1px;height:21.1px;background:rgb(238,238,241);"></div>
<div class="r" style="left:732.7px;top:1000.6px;width:22.1px;height:21.1px;background:rgb(238,238,241);"></div>
<div class="r" style="left:754.3px;top:1000.6px;width:22.1px;height:21.1px;background:rgb(228,228,231);"></div>
<div class="r" style="left:775.9px;top:1000.6px;width:22.1px;height:21.1px;background:rgb(240,240,243);"></div>
<div class="r" style="left:797.4px;top:1000.6px;width:22.1px;height:21.1px;background:rgb(240,240,243);"></div>
<div class="r" style="left:819.0px;top:1000.6px;width:22.1px;height:21.1px;background:rgb(234,234,237);"></div>
<div class="r" style="left:840.5px;top:1000.6px;width:22.1px;height:21.1px;background:rgb(225,225,228);"></div>
<div class="r" style="left:646.5px;top:1021.4px;width:22.1px;height:11.9px;background:rgb(200,200,203);"></div>
<div class="r" style="left:668.1px;top:1021.4px;width:22.1px;height:11.9px;background:rgb(205,205,208);"></div>
<div class="r" style="left:689.6px;top:1021.4px;width:22.1px;height:11.9px;background:rgb(215,215,218);"></div>
<div class="r" style="left:711.2px;top:1021.4px;width:22.1px;height:11.9px;background:rgb(190,190,193);"></div>
<div class="r" style="left:732.7px;top:1021.4px;width:22.1px;height:11.9px;background:rgb(190,190,193);"></div>
<div class="r" style="left:754.3px;top:1021.4px;width:22.1px;height:11.9px;background:rgb(180,180,183);"></div>
<div class="r" style="left:775.9px;top:1021.4px;width:22.1px;height:11.9px;background:rgb(200,200,203);"></div>
<div class="r" style="left:797.4px;top:1021.4px;width:22.1px;height:11.9px;background:rgb(200,200,203);"></div>
<div class="r" style="left:819.0px;top:1021.4px;width:22.1px;height:11.9px;background:rgb(196,196,199);"></div>
<div class="r" style="left:840.5px;top:1021.4px;width:22.1px;height:11.9px;background:rgb(190,190,193);"></div>
<div class="r" style="left:646.5px;top:1054.5px;width:22.1px;height:21.9px;background:rgb(252,252,255);"></div>
<div class="r" style="left:668.1px;top:1054.5px;width:22.1px;height:21.9px;background:rgb(242,242,245);"></div>
<div class="r" style="left:689.6px;top:1054.5px;width:22.1px;height:21.9px;background:rgb(252,252,255);"></div>
<div class="r" style="left:711.2px;top:1054.5px;width:22.1px;height:21.9px;background:rgb(244,244,247);"></div>
<div class="r" style="left:732.7px;top:1054.5px;width:22.1px;height:21.9px;background:rgb(252,252,255);"></div>
<div class="r" style="left:754.3px;top:1054.5px;width:22.1px;height:21.9px;background:rgb(252,252,255);"></div>
<div class="r" style="left:775.9px;top:1054.5px;width:22.1px;height:21.9px;background:rgb(250,250,253);"></div>
<div class="r" style="left:797.4px;top:1054.5px;width:22.1px;height:21.9px;background:rgb(252,252,255);"></div>
<div class="r" style="left:819.0px;top:1054.5px;width:22.1px;height:21.9px;background:rgb(252,252,255);"></div>
<div class="r" style="left:840.5px;top:1054.5px;width:22.1px;height:21.9px;background:rgb(246,246,249);"></div>
<div class="r" style="left:862.1px;top:1054.5px;width:22.1px;height:21.9px;background:rgb(250,250,253);"></div>
<div class="r" style="left:883.7px;top:1054.5px;width:22.1px;height:21.9px;background:rgb(252,252,255);"></div>
<div class="r" style="left:905.2px;top:1054.5px;width:22.1px;height:21.9px;background:rgb(252,252,255);"></div>
<div class="r" style="left:926.8px;top:1054.5px;width:22.1px;height:21.9px;background:rgb(252,252,255);"></div>
<div class="r" style="left:948.3px;top:1054.5px;width:22.1px;height:21.9px;background:rgb(252,252,255);"></div>
<div class="r" style="left:646.5px;top:1076.0px;width:22.1px;height:21.9px;background:rgb(225,225,228);"></div>
<div class="r" style="left:668.1px;top:1076.0px;width:22.1px;height:21.9px;background:rgb(225,225,228);"></div>
<div class="r" style="left:689.6px;top:1076.0px;width:22.1px;height:21.9px;background:rgb(225,225,228);"></div>
<div class="r" style="left:711.2px;top:1076.0px;width:22.1px;height:21.9px;background:rgb(225,225,228);"></div>
<div class="r" style="left:732.7px;top:1076.0px;width:22.1px;height:21.9px;background:rgb(235,235,238);"></div>
<div class="r" style="left:754.3px;top:1076.0px;width:22.1px;height:21.9px;background:rgb(235,235,238);"></div>
<div class="r" style="left:775.9px;top:1076.0px;width:22.1px;height:21.9px;background:rgb(235,235,238);"></div>
<div class="r" style="left:797.4px;top:1076.0px;width:22.1px;height:21.9px;background:rgb(230,230,233);"></div>
<div class="r" style="left:819.0px;top:1076.0px;width:22.1px;height:21.9px;background:rgb(215,215,218);"></div>
<div class="r" style="left:840.5px;top:1076.0px;width:22.1px;height:21.9px;background:rgb(225,225,228);"></div>
<div class="r" style="left:862.1px;top:1076.0px;width:22.1px;height:21.9px;background:rgb(225,225,228);"></div>
<div class="r" style="left:883.7px;top:1076.0px;width:22.1px;height:21.9px;background:rgb(225,225,228);"></div>
<div class="r" style="left:905.2px;top:1076.0px;width:22.1px;height:21.9px;background:rgb(200,200,203);"></div>
<div class="r" style="left:926.8px;top:1076.0px;width:22.1px;height:21.9px;background:rgb(222,222,225);"></div>
<div class="r" style="left:948.3px;top:1076.0px;width:22.1px;height:21.9px;background:rgb(225,225,228);"></div>
<div class="r" style="left:646.5px;top:1119.0px;width:22.1px;height:21.9px;background:rgb(205,205,208);"></div>
<div class="r" style="left:668.1px;top:1119.0px;width:22.1px;height:21.9px;background:rgb(205,205,208);"></div>
<div class="r" style="left:689.6px;top:1119.0px;width:22.1px;height:21.9px;background:rgb(210,210,213);"></div>
<div class="r" style="left:711.2px;top:1119.0px;width:22.1px;height:21.9px;background:rgb(222,222,225);"></div>
<div class="r" style="left:732.7px;top:1119.0px;width:22.1px;height:21.9px;background:rgb(185,185,188);"></div>
<div class="r" style="left:754.3px;top:1119.0px;width:22.1px;height:21.9px;background:rgb(225,225,228);"></div>
<div class="r" style="left:775.9px;top:1119.0px;width:22.1px;height:21.9px;background:rgb(205,205,208);"></div>
<div class="r" style="left:797.4px;top:1119.0px;width:22.1px;height:21.9px;background:rgb(215,215,218);"></div>
<div class="r" style="left:819.0px;top:1119.0px;width:22.1px;height:21.9px;background:rgb(205,205,208);"></div>
<div class="r" style="left:840.5px;top:1119.0px;width:22.1px;height:21.9px;background:rgb(205,205,208);"></div>
<div class="r" style="left:862.1px;top:1119.0px;width:22.1px;height:21.9px;background:rgb(195,195,198);"></div>
<div class="r" style="left:883.7px;top:1119.0px;width:22.1px;height:21.9px;background:rgb(210,210,213);"></div>
<div class="r" style="left:905.2px;top:1119.0px;width:22.1px;height:21.9px;background:rgb(210,210,213);"></div>
<div class="r" style="left:926.8px;top:1119.0px;width:22.1px;height:21.9px;background:rgb(205,205,208);"></div>
<div class="r" style="left:948.3px;top:1119.0px;width:22.1px;height:21.9px;background:rgb(245,245,248);"></div>
<div class="r" style="left:646.5px;top:1140.5px;width:22.1px;height:21.9px;background:rgb(255,255,255);"></div>
<div class="r" style="left:668.1px;top:1140.5px;width:22.1px;height:21.9px;background:rgb(255,255,255);"></div>
<div class="r" style="left:689.6px;top:1140.5px;width:22.1px;height:21.9px;background:rgb(255,255,255);"></div>
<div class="r" style="left:711.2px;top:1140.5px;width:22.1px;height:21.9px;background:rgb(255,255,255);"></div>
<div class="r" style="left:732.7px;top:1140.5px;width:22.1px;height:21.9px;background:rgb(255,255,255);"></div>
<div class="r" style="left:754.3px;top:1140.5px;width:22.1px;height:21.9px;background:rgb(255,255,255);"></div>
<div class="r" style="left:775.9px;top:1140.5px;width:22.1px;height:21.9px;background:rgb(255,255,255);"></div>
<div class="r" style="left:797.4px;top:1140.5px;width:22.1px;height:21.9px;background:rgb(255,255,255);"></div>
<div class="r" style="left:819.0px;top:1140.5px;width:22.1px;height:21.9px;background:rgb(255,255,255);"></div>
<div class="r" style="left:840.5px;top:1140.5px;width:22.1px;height:21.9px;background:rgb(255,255,255);"></div>
<div class="r" style="left:862.1px;top:1140.5px;width:22.1px;height:21.9px;background:rgb(255,255,255);"></div>
<div class="r" style="left:883.7px;top:1140.5px;width:22.1px;height:21.9px;background:rgb(255,255,255);"></div>
<div class="r" style="left:905.2px;top:1140.5px;width:22.1px;height:21.9px;background:rgb(240,240,243);"></div>
<div class="r" style="left:926.8px;top:1140.5px;width:22.1px;height:21.9px;background:rgb(255,255,255);"></div>
<div class="r" style="left:948.3px;top:1140.5px;width:22.1px;height:21.9px;background:rgb(255,255,255);"></div>
<div class="r" style="left:646.5px;top:1183.7px;width:22.1px;height:21.9px;background:rgb(215,215,218);"></div>
<div class="r" style="left:668.1px;top:1183.7px;width:22.1px;height:21.9px;background:rgb(205,205,208);"></div>
<div class="r" style="left:689.6px;top:1183.7px;width:22.1px;height:21.9px;background:rgb(180,180,183);"></div>
<div class="r" style="left:711.2px;top:1183.7px;width:22.1px;height:21.9px;background:rgb(200,200,203);"></div>
<div class="r" style="left:732.7px;top:1183.7px;width:22.1px;height:21.9px;background:rgb(195,195,198);"></div>
<div class="r" style="left:754.3px;top:1183.7px;width:22.1px;height:21.9px;background:rgb(205,205,208);"></div>
<div class="r" style="left:775.9px;top:1183.7px;width:22.1px;height:21.9px;background:rgb(205,205,208);"></div>
<div class="r" style="left:797.4px;top:1183.7px;width:22.1px;height:21.9px;background:rgb(205,205,208);"></div>
<div class="r" style="left:819.0px;top:1183.7px;width:22.1px;height:21.9px;background:rgb(210,210,213);"></div>
<div class="r" style="left:840.5px;top:1183.7px;width:22.1px;height:21.9px;background:rgb(205,205,208);"></div>
<div class="r" style="left:862.1px;top:1183.7px;width:22.1px;height:21.9px;background:rgb(185,185,188);"></div>
<div class="r" style="left:883.7px;top:1183.7px;width:22.1px;height:21.9px;background:rgb(205,205,208);"></div>
<div class="r" style="left:905.2px;top:1183.7px;width:22.1px;height:21.9px;background:rgb(210,210,213);"></div>
<div class="r" style="left:926.8px;top:1183.7px;width:22.1px;height:21.9px;background:rgb(195,195,198);"></div>
<div class="r" style="left:948.3px;top:1183.7px;width:22.1px;height:21.9px;background:rgb(170,170,173);"></div>
<div class="r" style="left:969.9px;top:1183.7px;width:22.1px;height:21.9px;background:rgb(220,220,223);"></div>
<div class="r" style="left:991.5px;top:1183.7px;width:22.1px;height:21.9px;background:rgb(210,210,213);"></div>
<div class="r" style="left:1013.0px;top:1183.7px;width:22.1px;height:21.9px;background:rgb(210,210,213);"></div>
<div class="r" style="left:646.5px;top:1226.7px;width:22.1px;height:21.9px;background:rgb(238,238,241);"></div>
<div class="r" style="left:668.1px;top:1226.7px;width:22.1px;height:21.9px;background:rgb(238,238,241);"></div>
<div class="r" style="left:689.6px;top:1226.7px;width:22.1px;height:21.9px;background:rgb(230,230,233);"></div>
<div class="r" style="left:711.2px;top:1226.7px;width:22.1px;height:21.9px;background:rgb(244,244,247);"></div>
<div class="r" style="left:732.7px;top:1226.7px;width:22.1px;height:21.9px;background:rgb(238,238,241);"></div>
<div class="r" style="left:754.3px;top:1226.7px;width:22.1px;height:21.9px;background:rgb(228,228,231);"></div>
<div class="r" style="left:775.9px;top:1226.7px;width:22.1px;height:21.9px;background:rgb(238,238,241);"></div>
<div class="r" style="left:797.4px;top:1226.7px;width:22.1px;height:21.9px;background:rgb(244,244,247);"></div>
<div class="r" style="left:819.0px;top:1226.7px;width:22.1px;height:21.9px;background:rgb(235,235,238);"></div>
<div class="r" style="left:840.5px;top:1226.7px;width:22.1px;height:21.9px;background:rgb(235,235,238);"></div>
<div class="r" style="left:862.1px;top:1226.7px;width:22.1px;height:21.9px;background:rgb(228,228,231);"></div>
<div class="r" style="left:883.7px;top:1226.7px;width:22.1px;height:21.9px;background:rgb(238,238,241);"></div>
<div class="r" style="left:905.2px;top:1226.7px;width:22.1px;height:21.9px;background:rgb(244,244,247);"></div>
<div class="r" style="left:926.8px;top:1226.7px;width:22.1px;height:21.9px;background:rgb(238,238,241);"></div>
<div class="r" style="left:948.3px;top:1226.7px;width:22.1px;height:21.9px;background:rgb(235,235,238);"></div>
<div class="r" style="left:646.5px;top:1248.2px;width:22.1px;height:21.9px;background:rgb(244,244,247);"></div>
<div class="r" style="left:668.1px;top:1248.2px;width:22.1px;height:21.9px;background:rgb(232,232,235);"></div>
<div class="r" style="left:689.6px;top:1248.2px;width:22.1px;height:21.9px;background:rgb(232,232,235);"></div>
<div class="r" style="left:711.2px;top:1248.2px;width:22.1px;height:21.9px;background:rgb(238,238,241);"></div>
<div class="r" style="left:732.7px;top:1248.2px;width:22.1px;height:21.9px;background:rgb(234,234,237);"></div>
<div class="r" style="left:754.3px;top:1248.2px;width:22.1px;height:21.9px;background:rgb(240,240,243);"></div>
<div class="r" style="left:775.9px;top:1248.2px;width:22.1px;height:21.9px;background:rgb(234,234,237);"></div>
<div class="r" style="left:797.4px;top:1248.2px;width:22.1px;height:21.9px;background:rgb(234,234,237);"></div>
<div class="r" style="left:819.0px;top:1248.2px;width:22.1px;height:21.9px;background:rgb(234,234,237);"></div>
<div class="r" style="left:840.5px;top:1248.2px;width:22.1px;height:21.9px;background:rgb(232,232,235);"></div>
<div class="r" style="left:862.1px;top:1248.2px;width:22.1px;height:21.9px;background:rgb(228,228,231);"></div>
<div class="r" style="left:883.7px;top:1248.2px;width:22.1px;height:21.9px;background:rgb(240,240,243);"></div>
<div class="r" style="left:905.2px;top:1248.2px;width:22.1px;height:21.9px;background:rgb(232,232,235);"></div>
<div class="r" style="left:926.8px;top:1248.2px;width:22.1px;height:21.9px;background:rgb(238,238,241);"></div>
<div class="r" style="left:948.3px;top:1248.2px;width:22.1px;height:21.9px;background:rgb(240,240,243);"></div>
<div class="r" style="left:646.5px;top:1292.0px;width:22.1px;height:21.9px;background:rgb(205,205,208);"></div>
<div class="r" style="left:668.1px;top:1292.0px;width:22.1px;height:21.9px;background:rgb(190,190,193);"></div>
<div class="r" style="left:689.6px;top:1292.0px;width:22.1px;height:21.9px;background:rgb(190,190,193);"></div>
<div class="r" style="left:711.2px;top:1292.0px;width:22.1px;height:21.9px;background:rgb(195,195,198);"></div>
<div class="r" style="left:732.7px;top:1292.0px;width:22.1px;height:21.9px;background:rgb(215,215,218);"></div>
<div class="r" style="left:754.3px;top:1292.0px;width:22.1px;height:21.9px;background:rgb(205,205,208);"></div>
<div class="r" style="left:775.9px;top:1292.0px;width:22.1px;height:21.9px;background:rgb(190,190,193);"></div>
<div class="r" style="left:797.4px;top:1292.0px;width:22.1px;height:21.9px;background:rgb(190,190,193);"></div>
<div class="r" style="left:819.0px;top:1292.0px;width:22.1px;height:21.9px;background:rgb(222,222,225);"></div>
<div class="r" style="left:840.5px;top:1292.0px;width:22.1px;height:21.9px;background:rgb(195,195,198);"></div>
<div class="r" style="left:862.1px;top:1292.0px;width:22.1px;height:21.9px;background:rgb(228,228,231);"></div>
<div class="r" style="left:1047.4px;top:478.0px;width:1473.6px;height:864.5px;background:#f8f7f6;"></div>
<div class="r" style="left:1046.5px;top:476.0px;width:1475.5px;height:2.0px;background:#e8e8e8;"></div>
<svg style="left:1060px;top:415px" width="50" height="50" viewBox="0 0 50 50"><g fill="none" stroke="#5f5f5f" stroke-width="1.6"><path d="M10 18.8 V13.9 H37.1 V35.5 H10 V30.3"/><path d="M28.2 21.1 H37.1 M28.2 27.6 H37.1"/></g><path d="M18.6 13.9 H28.3 V35.5 H18.6 V27.4 H25.3 V21.9 H18.6Z" fill="#5f5f5f"/><path d="M23.4 24.9 H10.8 M15.8 19.6 L10.5 24.9 L15.8 30.2" fill="none" stroke="#5f5f5f" stroke-width="1.6"/></svg>
<div class="r" style="left:1128.0px;top:432.0px;width:173.0px;height:39.0px;background:#f8f8f8;"></div>
<div class="r" style="left:1143.0px;top:432.0px;width:22.0px;height:10.3px;background:rgb(242,242,245);"></div>
<div class="r" style="left:1164.5px;top:432.0px;width:22.0px;height:10.3px;background:rgb(242,242,245);"></div>
<div class="r" style="left:1186.0px;top:432.0px;width:22.0px;height:10.3px;background:rgb(228,228,231);"></div>
<div class="r" style="left:1207.5px;top:432.0px;width:22.0px;height:10.3px;background:rgb(228,228,231);"></div>
<div class="r" style="left:1229.0px;top:432.0px;width:22.0px;height:10.3px;background:rgb(240,240,243);"></div>
<div class="r" style="left:1250.5px;top:432.0px;width:22.0px;height:10.3px;background:rgb(240,240,243);"></div>
<div class="r" style="left:1272.0px;top:432.0px;width:22.0px;height:10.3px;background:rgb(240,240,243);"></div>
<div class="r" style="left:1143.0px;top:442.0px;width:22.0px;height:20.3px;background:rgb(236,236,239);"></div>
<div class="r" style="left:1164.5px;top:442.0px;width:22.0px;height:20.3px;background:rgb(234,234,237);"></div>
<div class="r" style="left:1186.0px;top:442.0px;width:22.0px;height:20.3px;background:rgb(240,240,243);"></div>
<div class="r" style="left:1207.5px;top:442.0px;width:22.0px;height:20.3px;background:rgb(238,238,241);"></div>
<div class="r" style="left:1229.0px;top:442.0px;width:22.0px;height:20.3px;background:rgb(196,196,199);"></div>
<div class="r" style="left:1250.5px;top:442.0px;width:22.0px;height:20.3px;background:rgb(232,232,235);"></div>
<div class="r" style="left:1272.0px;top:442.0px;width:22.0px;height:20.3px;background:rgb(238,238,241);"></div>
<div class="r" style="left:1079.6px;top:503.4px;width:688.0px;height:284.3px;background:#ffffff;border:1px solid #e6e6e6;box-sizing:border-box;border-radius:4px;box-shadow:0 1.5px 3px rgba(0,0,0,0.10)"></div>
<div class="t" style="left:1108.6px;top:531.9px;font-size:27.5px;color:#605e5c;font-weight:400;">Crawl-gegevens</div>
<div class="t" style="left:1062px;width:101px;text-align:right;top:593.0px;font-size:17.5px;color:#666">20.0K</div>
<div class="t" style="left:1062px;width:101px;text-align:right;top:626.5px;font-size:17.5px;color:#666">15.0K</div>
<div class="t" style="left:1062px;width:101px;text-align:right;top:660.0px;font-size:17.5px;color:#666">10.0K</div>
<div class="t" style="left:1062px;width:101px;text-align:right;top:693.5px;font-size:17.5px;color:#666">5.0K</div>
<div class="t" style="left:1062px;width:101px;text-align:right;top:727.0px;font-size:17.5px;color:#666">0</div>
<div class="r" style="left:1189.0px;top:598.8px;width:1.0px;height:135.0px;background:#d9d9d9;"></div>
<div class="r" style="left:1189.0px;top:733.0px;width:547.0px;height:1.3px;background:#d9d9d9;"></div>
<div class="r" style="left:1208.5px;top:620.0px;width:98.0px;height:113.0px;background:#228b22;"></div>
<div class="r" style="left:1481.8px;top:697.5px;width:98.2px;height:35.5px;background:#fbb812;"></div>
<div class="r" style="left:1618.4px;top:728.3px;width:97.6px;height:5.0px;background:#5b9bd5;"></div>
<div class="r" style="left:1229.0px;top:591.0px;width:21.1px;height:22.3px;background:rgb(202,204,208);"></div>
<div class="r" style="left:1249.6px;top:591.0px;width:21.1px;height:22.3px;background:rgb(196,198,202);"></div>
<div class="r" style="left:1270.2px;top:591.0px;width:21.1px;height:22.3px;background:rgb(176,178,182);"></div>
<div class="r" style="left:1226.0px;top:612.5px;width:64.8px;height:1.3px;background:#2f9b3a;"></div>
<div class="r" style="left:1379.8px;top:705.5px;width:21.2px;height:14.3px;background:#dedede;"></div>
<div class="r" style="left:1490.0px;top:677.0px;width:72.0px;height:14.0px;background:#f3f3f3;"></div>
<div class="r" style="left:1509.0px;top:655.8px;width:22.0px;height:17.8px;background:rgb(232,232,235);"></div>
<div class="r" style="left:1530.5px;top:655.8px;width:22.0px;height:17.8px;background:rgb(236,236,239);"></div>
<div class="r" style="left:1509.0px;top:673.3px;width:22.0px;height:17.8px;background:rgb(210,210,213);"></div>
<div class="r" style="left:1530.5px;top:673.3px;width:22.0px;height:17.8px;background:rgb(215,215,218);"></div>
<div class="r" style="left:1638.0px;top:700.0px;width:51.0px;height:21.0px;background:#f0f0f0;"></div>
<div class="r" style="left:1660.0px;top:700.0px;width:21.5px;height:21.0px;background:#9fa1a4;"></div>
<div class="r" style="left:1637.0px;top:721.0px;width:52.0px;height:1.0px;background:#9ec4ea;"></div>
<div class="t" style="left:1177.3px;width:160px;text-align:center;top:755.6px;font-size:17.6px;color:#666">Geïndexeerd</div>
<div class="t" style="left:1313.5px;width:160px;text-align:center;top:755.6px;font-size:17.6px;color:#666">Fout</div>
<div class="t" style="left:1450.3px;width:160px;text-align:center;top:755.6px;font-size:17.6px;color:#666">Waarschuwing</div>
<div class="t" style="left:1587px;width:160px;text-align:center;top:755.6px;font-size:17.6px;color:#666">Uitgesloten</div>
<div class="r" style="left:1802.6px;top:503.8px;width:687.4px;height:283.7px;background:#ffffff;border:1px solid #e6e6e6;box-sizing:border-box;border-radius:4px;box-shadow:0 1.5px 3px rgba(0,0,0,0.10)"></div>
<div class="t" style="left:1831.7px;top:532.3px;font-size:28px;color:#605e5c;font-weight:400;">Mapgegevens</div>
<svg style="left:2247px;top:529px" width="26" height="26" viewBox="0 0 26 26"><rect x="2.5" y="4.5" width="20.5" height="18" fill="none" stroke="#666" stroke-width="1.5"/><path d="M2.5 9 H23 M7 2.5 V6 M18 2.5 V6" stroke="#666" stroke-width="1.5"/><g fill="#888"><rect x="5.5" y="11.5" width="2" height="2"/><rect x="9.5" y="11.5" width="2" height="2"/><rect x="13.5" y="11.5" width="2" height="2"/><rect x="17.5" y="11.5" width="2" height="2"/><rect x="5.5" y="15.5" width="2" height="2"/><rect x="9.5" y="15.5" width="2" height="2"/><rect x="13.5" y="15.5" width="2" height="2"/><rect x="17.5" y="15.5" width="2" height="2"/><rect x="5.5" y="19" width="2" height="2"/><rect x="9.5" y="19" width="2" height="2"/><rect x="13.5" y="19" width="2" height="2"/></g></svg>
<div class="t" style="left:2285.7px;top:534.3px;font-size:20.5px;color:#605e5c;font-weight:400;">Laatste 6 maanden</div>
<div class="t" style="left:1831.7px;top:599.3px;font-size:24px;color:#323130;font-weight:400;">URLs</div>
<div class="t" style="left:1831.7px;top:640.7px;font-size:24px;color:#323130;font-weight:400;">Klikken</div>
<div class="t" style="left:1831.7px;top:683.1px;font-size:24px;color:#323130;font-weight:400;">Indrukken</div>
<div class="t" style="left:1831.7px;top:724.7px;font-size:24px;color:#323130;font-weight:400;">Terugverwijzingen</div>
<div class="r" style="left:2405.0px;top:591.3px;width:22.1px;height:21.9px;background:rgb(222,222,225);"></div>
<div class="r" style="left:2426.6px;top:591.3px;width:22.1px;height:21.9px;background:rgb(226,226,229);"></div>
<div class="r" style="left:2448.2px;top:591.3px;width:22.1px;height:21.9px;background:rgb(212,212,215);"></div>
<div class="r" style="left:2405.0px;top:612.9px;width:22.1px;height:21.9px;background:rgb(244,244,247);"></div>
<div class="r" style="left:2426.6px;top:612.9px;width:22.1px;height:21.9px;background:rgb(244,244,247);"></div>
<div class="r" style="left:2448.2px;top:612.9px;width:22.1px;height:21.9px;background:rgb(250,250,253);"></div>
<div class="r" style="left:2405.0px;top:634.5px;width:22.1px;height:21.9px;background:rgb(205,205,208);"></div>
<div class="r" style="left:2426.6px;top:634.5px;width:22.1px;height:21.9px;background:rgb(225,225,228);"></div>
<div class="r" style="left:2448.2px;top:634.5px;width:22.1px;height:21.9px;background:rgb(208,208,211);"></div>
<div class="r" style="left:2405.0px;top:677.0px;width:22.1px;height:21.9px;background:rgb(215,215,218);"></div>
<div class="r" style="left:2426.6px;top:677.0px;width:22.1px;height:21.9px;background:rgb(210,210,213);"></div>
<div class="r" style="left:2448.2px;top:677.0px;width:22.1px;height:21.9px;background:rgb(205,205,208);"></div>
<div class="r" style="left:2386.0px;top:720.4px;width:21.6px;height:21.4px;background:rgb(228,228,231);"></div>
<div class="r" style="left:2407.1px;top:720.4px;width:21.6px;height:21.4px;background:rgb(190,190,193);"></div>
<div class="r" style="left:2428.2px;top:720.4px;width:21.6px;height:21.4px;background:rgb(225,225,228);"></div>
<div class="r" style="left:2449.3px;top:720.4px;width:21.6px;height:21.4px;background:rgb(198,198,201);"></div>
<div class="r" style="left:1076.0px;top:819.0px;width:1418.0px;height:503.0px;background:#ffffff;border:1px solid #e6e6e6;box-sizing:border-box;border-radius:4px;box-shadow:0 1.5px 3px rgba(0,0,0,0.10)"></div>
<div class="t" style="left:1098.6px;top:848.9px;font-size:24px;color:#323130;font-weight:400;letter-spacing:0.2px;-webkit-text-stroke:0.85px #323130">URL</div>
<div class="t" style="left:1364px;top:848.9px;font-size:24px;color:#323130;font-weight:400;letter-spacing:0.2px;-webkit-text-stroke:0.85px #323130">Klikken</div>
<div class="t" style="left:1541px;top:848.9px;font-size:24px;color:#323130;font-weight:400;letter-spacing:0.2px;-webkit-text-stroke:0.85px #323130">Indrukken</div>
<div class="t" style="left:1771px;top:848.9px;font-size:24px;color:#323130;font-weight:400;letter-spacing:0.2px;-webkit-text-stroke:0.85px #323130">Laatste gecrawld</div>
<div class="t" style="left:2019.3px;top:848.9px;font-size:24px;color:#323130;-webkit-text-stroke:0.85px #323130;letter-spacing:-0.3px;width:49px;overflow:hidden">HTTP</div>
<svg style="left:1454px;top:845px" width="24" height="34" viewBox="0 0 24 34"><path d="M11.5 3 V29 M4.5 21.5 L11.5 29.5 L18.5 21.5" fill="none" stroke="#444" stroke-width="1.8"/></svg>
<div class="r" style="left:1076.0px;top:899.5px;width:992.0px;height:1.5px;background:#ebebeb;"></div>
<div class="r" style="left:1076.0px;top:900.7px;width:992.0px;height:74.3px;background:#d3e3f4;"></div>
<div class="r" style="left:1140.2px;top:894.7px;width:918.0px;height:63.3px;background:#d3e3f4;"></div>
<div class="r" style="left:1140.2px;top:958.0px;width:918.0px;height:21.0px;background:#dde9f6;"></div>
<div class="r" style="left:1076.0px;top:1077.7px;width:64.0px;height:1.3px;background:#ececec;"></div>
<div class="r" style="left:2058.0px;top:1077.7px;width:10.0px;height:1.3px;background:#ececec;"></div>
<div class="r" style="left:1076.0px;top:1179.6px;width:64.0px;height:1.3px;background:#ececec;"></div>
<div class="r" style="left:2058.0px;top:1179.6px;width:10.0px;height:1.3px;background:#ececec;"></div>
<div class="r" style="left:1076.0px;top:1254.3px;width:64.0px;height:1.3px;background:#ececec;"></div>
<div class="r" style="left:2058.0px;top:1254.3px;width:10.0px;height:1.3px;background:#ececec;"></div>
<svg style="left:1097.5px;top:921.5px" width="28" height="32" viewBox="0 0 28 32"><path d="M2 2 H16.5 L24.5 10 V29.5 H2Z M16.5 2 V10 H24.5" fill="none" stroke="#555" stroke-width="1.9" stroke-linejoin="miter"/><path d="M6.5 18 H19.5 M6.5 22 H19.5 M6.5 26 H19.5" stroke="#555" stroke-width="1.8"/></svg>
<svg style="left:1097.5px;top:997.5px" width="28" height="32" viewBox="0 0 28 32"><path d="M2 2 H16.5 L24.5 10 V29.5 H2Z M16.5 2 V10 H24.5" fill="none" stroke="#555" stroke-width="1.9" stroke-linejoin="miter"/><path d="M6.5 18 H19.5 M6.5 22 H19.5 M6.5 26 H19.5" stroke="#555" stroke-width="1.8"/></svg>
<svg style="left:1097.5px;top:1098.5px" width="28" height="32" viewBox="0 0 28 32"><path d="M2 2 H16.5 L24.5 10 V29.5 H2Z M16.5 2 V10 H24.5" fill="none" stroke="#555" stroke-width="1.9" stroke-linejoin="miter"/><path d="M6.5 18 H19.5 M6.5 22 H19.5 M6.5 26 H19.5" stroke="#555" stroke-width="1.8"/></svg>
<svg style="left:1097.5px;top:1200.5px" width="28" height="32" viewBox="0 0 28 32"><path d="M2 2 H16.5 L24.5 10 V29.5 H2Z M16.5 2 V10 H24.5" fill="none" stroke="#555" stroke-width="1.9" stroke-linejoin="miter"/><path d="M6.5 18 H19.5 M6.5 22 H19.5 M6.5 26 H19.5" stroke="#555" stroke-width="1.8"/></svg>
<svg style="left:1097.5px;top:1275.5px" width="28" height="32" viewBox="0 0 28 32"><path d="M2 2 H16.5 L24.5 10 V29.5 H2Z M16.5 2 V10 H24.5" fill="none" stroke="#555" stroke-width="1.9" stroke-linejoin="miter"/><path d="M6.5 18 H19.5 M6.5 22 H19.5 M6.5 26 H19.5" stroke="#555" stroke-width="1.8"/></svg>
<div class="r" style="left:1142.6px;top:914.0px;width:22.1px;height:21.9px;background:rgb(205,205,207);"></div>
<div class="r" style="left:1164.2px;top:914.0px;width:22.1px;height:21.9px;background:rgb(210,210,212);"></div>
<div class="r" style="left:1185.7px;top:914.0px;width:22.1px;height:21.9px;background:rgb(210,210,212);"></div>
<div class="r" style="left:1207.3px;top:914.0px;width:22.1px;height:21.9px;background:rgb(190,190,192);"></div>
<div class="r" style="left:1142.6px;top:935.6px;width:22.1px;height:21.9px;background:rgb(213,217,221);"></div>
<div class="r" style="left:1164.2px;top:935.6px;width:22.1px;height:21.9px;background:rgb(213,217,221);"></div>
<div class="r" style="left:1185.7px;top:935.6px;width:22.1px;height:21.9px;background:rgb(209,213,217);"></div>
<div class="r" style="left:1207.3px;top:935.6px;width:22.1px;height:21.9px;background:rgb(205,209,213);"></div>
<div class="r" style="left:1357.8px;top:914.0px;width:22.1px;height:21.9px;background:rgb(198,198,200);"></div>
<div class="r" style="left:1379.4px;top:914.0px;width:22.1px;height:21.9px;background:rgb(190,190,192);"></div>
<div class="r" style="left:1400.9px;top:914.0px;width:22.1px;height:21.9px;background:rgb(190,190,192);"></div>
<div class="r" style="left:1357.8px;top:935.6px;width:22.1px;height:21.9px;background:rgb(215,218,222);"></div>
<div class="r" style="left:1379.4px;top:935.6px;width:22.1px;height:21.9px;background:rgb(189,192,196);"></div>
<div class="r" style="left:1400.9px;top:935.6px;width:22.1px;height:21.9px;background:rgb(209,212,216);"></div>
<div class="r" style="left:1530.6px;top:914.0px;width:22.1px;height:21.9px;background:rgb(200,208,216);"></div>
<div class="r" style="left:1552.2px;top:914.0px;width:22.1px;height:21.9px;background:rgb(160,168,176);"></div>
<div class="r" style="left:1573.7px;top:914.0px;width:22.1px;height:21.9px;background:rgb(168,176,184);"></div>
<div class="r" style="left:1595.3px;top:914.0px;width:22.1px;height:21.9px;background:rgb(205,213,221);"></div>
<div class="r" style="left:1530.6px;top:935.6px;width:22.1px;height:21.9px;background:rgb(213,218,224);"></div>
<div class="r" style="left:1552.2px;top:935.6px;width:22.1px;height:21.9px;background:rgb(205,210,216);"></div>
<div class="r" style="left:1573.7px;top:935.6px;width:22.1px;height:21.9px;background:rgb(211,216,222);"></div>
<div class="r" style="left:1595.3px;top:935.6px;width:22.1px;height:21.9px;background:rgb(211,216,222);"></div>
<div class="r" style="left:1768.0px;top:914.0px;width:22.1px;height:21.9px;background:rgb(188,194,200);"></div>
<div class="r" style="left:1789.6px;top:914.0px;width:22.1px;height:21.9px;background:rgb(220,226,232);"></div>
<div class="r" style="left:1811.1px;top:914.0px;width:22.1px;height:21.9px;background:rgb(198,204,210);"></div>
<div class="r" style="left:1832.7px;top:914.0px;width:22.1px;height:21.9px;background:rgb(212,218,224);"></div>
<div class="r" style="left:1854.2px;top:914.0px;width:22.1px;height:21.9px;background:rgb(162,168,174);"></div>
<div class="r" style="left:1875.8px;top:914.0px;width:22.1px;height:21.9px;background:rgb(168,174,180);"></div>
<div class="r" style="left:1897.4px;top:914.0px;width:22.1px;height:21.9px;background:rgb(222,228,234);"></div>
<div class="r" style="left:1768.0px;top:935.6px;width:22.1px;height:21.9px;background:rgb(215,219,224);"></div>
<div class="r" style="left:1789.6px;top:935.6px;width:22.1px;height:21.9px;background:rgb(215,219,224);"></div>
<div class="r" style="left:1811.1px;top:935.6px;width:22.1px;height:21.9px;background:rgb(205,209,214);"></div>
<div class="r" style="left:1832.7px;top:935.6px;width:22.1px;height:21.9px;background:rgb(215,219,224);"></div>
<div class="r" style="left:1854.2px;top:935.6px;width:22.1px;height:21.9px;background:rgb(189,193,198);"></div>
<div class="r" style="left:1875.8px;top:935.6px;width:22.1px;height:21.9px;background:rgb(189,193,198);"></div>
<div class="r" style="left:1897.4px;top:935.6px;width:22.1px;height:21.9px;background:rgb(219,223,228);"></div>
<div class="r" style="left:2026.9px;top:914.0px;width:31.5px;height:21.9px;background:rgb(165,173,181);"></div>
<div class="r" style="left:2026.9px;top:935.6px;width:31.5px;height:21.9px;background:rgb(206,210,214);"></div>
<div class="r" style="left:1142.6px;top:1001.3px;width:22.1px;height:21.9px;background:rgb(187,187,190);"></div>
<div class="r" style="left:1164.2px;top:1001.3px;width:22.1px;height:21.9px;background:rgb(191,191,194);"></div>
<div class="r" style="left:1185.7px;top:1001.3px;width:22.1px;height:21.9px;background:rgb(191,191,194);"></div>
<div class="r" style="left:1207.3px;top:1001.3px;width:22.1px;height:21.9px;background:rgb(195,195,198);"></div>
<div class="r" style="left:1228.8px;top:1001.3px;width:22.1px;height:21.9px;background:rgb(210,210,213);"></div>
<div class="r" style="left:1250.4px;top:1001.3px;width:22.1px;height:21.9px;background:rgb(195,195,198);"></div>
<div class="r" style="left:1272.0px;top:1001.3px;width:22.1px;height:21.9px;background:rgb(195,195,198);"></div>
<div class="r" style="left:1293.5px;top:1001.3px;width:22.1px;height:21.9px;background:rgb(240,240,243);"></div>
<div class="r" style="left:1142.6px;top:1022.3px;width:22.1px;height:11.3px;background:rgb(240,240,243);"></div>
<div class="r" style="left:1164.2px;top:1022.3px;width:22.1px;height:11.3px;background:rgb(235,235,238);"></div>
<div class="r" style="left:1185.7px;top:1022.3px;width:22.1px;height:11.3px;background:rgb(235,235,238);"></div>
<div class="r" style="left:1207.3px;top:1022.3px;width:22.1px;height:11.3px;background:rgb(235,235,238);"></div>
<div class="r" style="left:1228.8px;top:1022.3px;width:22.1px;height:11.3px;background:rgb(245,245,248);"></div>
<div class="r" style="left:1250.4px;top:1022.3px;width:22.1px;height:11.3px;background:rgb(235,235,238);"></div>
<div class="r" style="left:1272.0px;top:1022.3px;width:22.1px;height:11.3px;background:rgb(240,240,243);"></div>
<div class="r" style="left:1293.5px;top:1022.3px;width:22.1px;height:11.3px;background:rgb(250,250,253);"></div>
<div class="r" style="left:1142.6px;top:1033.0px;width:22.1px;height:21.9px;background:rgb(203,203,206);"></div>
<div class="r" style="left:1164.2px;top:1033.0px;width:22.1px;height:21.9px;background:rgb(203,203,206);"></div>
<div class="r" style="left:1185.7px;top:1033.0px;width:22.1px;height:21.9px;background:rgb(203,203,206);"></div>
<div class="r" style="left:1207.3px;top:1033.0px;width:22.1px;height:21.9px;background:rgb(203,203,206);"></div>
<div class="r" style="left:1228.8px;top:1033.0px;width:22.1px;height:21.9px;background:rgb(203,203,206);"></div>
<div class="r" style="left:1250.4px;top:1033.0px;width:22.1px;height:21.9px;background:rgb(203,203,206);"></div>
<div class="r" style="left:1272.0px;top:1033.0px;width:22.1px;height:21.9px;background:rgb(225,225,228);"></div>
<div class="r" style="left:1357.8px;top:1001.3px;width:22.1px;height:21.9px;background:rgb(228,228,231);"></div>
<div class="r" style="left:1379.4px;top:1001.3px;width:22.1px;height:21.9px;background:rgb(199,199,202);"></div>
<div class="r" style="left:1400.9px;top:1001.3px;width:22.1px;height:21.9px;background:rgb(222,222,225);"></div>
<div class="r" style="left:1357.8px;top:1022.3px;width:22.1px;height:11.3px;background:rgb(250,250,253);"></div>
<div class="r" style="left:1379.4px;top:1022.3px;width:22.1px;height:11.3px;background:rgb(245,245,248);"></div>
<div class="r" style="left:1400.9px;top:1022.3px;width:22.1px;height:11.3px;background:rgb(250,250,253);"></div>
<div class="r" style="left:1530.6px;top:1001.3px;width:22.1px;height:21.9px;background:rgb(225,225,228);"></div>
<div class="r" style="left:1552.2px;top:1001.3px;width:22.1px;height:21.9px;background:rgb(199,199,202);"></div>
<div class="r" style="left:1573.7px;top:1001.3px;width:22.1px;height:21.9px;background:rgb(218,218,221);"></div>
<div class="r" style="left:1595.3px;top:1001.3px;width:22.1px;height:21.9px;background:rgb(240,240,243);"></div>
<div class="r" style="left:1530.6px;top:1022.3px;width:22.1px;height:11.3px;background:rgb(250,250,253);"></div>
<div class="r" style="left:1552.2px;top:1022.3px;width:22.1px;height:11.3px;background:rgb(240,240,243);"></div>
<div class="r" style="left:1573.7px;top:1022.3px;width:22.1px;height:11.3px;background:rgb(250,250,253);"></div>
<div class="r" style="left:1595.3px;top:1022.3px;width:22.1px;height:11.3px;background:rgb(250,250,253);"></div>
<div class="r" style="left:1768.0px;top:1001.3px;width:22.1px;height:21.9px;background:rgb(230,230,233);"></div>
<div class="r" style="left:1789.6px;top:1001.3px;width:22.1px;height:21.9px;background:rgb(230,230,233);"></div>
<div class="r" style="left:1811.1px;top:1001.3px;width:22.1px;height:21.9px;background:rgb(207,207,210);"></div>
<div class="r" style="left:1832.7px;top:1001.3px;width:22.1px;height:21.9px;background:rgb(210,210,213);"></div>
<div class="r" style="left:1854.2px;top:1001.3px;width:22.1px;height:21.9px;background:rgb(199,199,202);"></div>
<div class="r" style="left:1875.8px;top:1001.3px;width:22.1px;height:21.9px;background:rgb(207,207,210);"></div>
<div class="r" style="left:1897.4px;top:1001.3px;width:22.1px;height:21.9px;background:rgb(225,225,228);"></div>
<div class="r" style="left:1768.0px;top:1022.3px;width:22.1px;height:11.3px;background:rgb(250,250,253);"></div>
<div class="r" style="left:1789.6px;top:1022.3px;width:22.1px;height:11.3px;background:rgb(245,245,248);"></div>
<div class="r" style="left:1811.1px;top:1022.3px;width:22.1px;height:11.3px;background:rgb(245,245,248);"></div>
<div class="r" style="left:1832.7px;top:1022.3px;width:22.1px;height:11.3px;background:rgb(240,240,243);"></div>
<div class="r" style="left:1854.2px;top:1022.3px;width:22.1px;height:11.3px;background:rgb(240,240,243);"></div>
<div class="r" style="left:1875.8px;top:1022.3px;width:22.1px;height:11.3px;background:rgb(245,245,248);"></div>
<div class="r" style="left:1897.4px;top:1022.3px;width:22.1px;height:11.3px;background:rgb(250,250,253);"></div>
<div class="r" style="left:2026.9px;top:1001.3px;width:31.5px;height:21.9px;background:rgb(199,199,202);"></div>
<div class="r" style="left:2026.9px;top:1022.3px;width:31.5px;height:11.3px;background:rgb(235,235,238);"></div>
<div class="r" style="left:1142.6px;top:1097.8px;width:22.1px;height:21.9px;background:rgb(207,207,210);"></div>
<div class="r" style="left:1164.2px;top:1097.8px;width:22.1px;height:21.9px;background:rgb(214,214,217);"></div>
<div class="r" style="left:1185.7px;top:1097.8px;width:22.1px;height:21.9px;background:rgb(207,207,210);"></div>
<div class="r" style="left:1207.3px;top:1097.8px;width:22.1px;height:21.9px;background:rgb(214,214,217);"></div>
<div class="r" style="left:1228.8px;top:1097.8px;width:22.1px;height:21.9px;background:rgb(195,195,198);"></div>
<div class="r" style="left:1250.4px;top:1097.8px;width:22.1px;height:21.9px;background:rgb(210,210,213);"></div>
<div class="r" style="left:1272.0px;top:1097.8px;width:22.1px;height:21.9px;background:rgb(199,199,202);"></div>
<div class="r" style="left:1293.5px;top:1097.8px;width:22.1px;height:21.9px;background:rgb(199,199,202);"></div>
<div class="r" style="left:1315.1px;top:1097.8px;width:22.1px;height:21.9px;background:rgb(240,240,243);"></div>
<div class="r" style="left:1142.6px;top:1119.3px;width:22.1px;height:21.9px;background:rgb(225,225,228);"></div>
<div class="r" style="left:1164.2px;top:1119.3px;width:22.1px;height:21.9px;background:rgb(252,252,255);"></div>
<div class="r" style="left:1185.7px;top:1119.3px;width:22.1px;height:21.9px;background:rgb(225,225,228);"></div>
<div class="r" style="left:1207.3px;top:1119.3px;width:22.1px;height:21.9px;background:rgb(250,250,253);"></div>
<div class="r" style="left:1228.8px;top:1119.3px;width:22.1px;height:21.9px;background:rgb(230,230,233);"></div>
<div class="r" style="left:1250.4px;top:1119.3px;width:22.1px;height:21.9px;background:rgb(250,250,253);"></div>
<div class="r" style="left:1272.0px;top:1119.3px;width:22.1px;height:21.9px;background:rgb(230,230,233);"></div>
<div class="r" style="left:1142.6px;top:1140.8px;width:22.1px;height:21.9px;background:rgb(225,225,228);"></div>
<div class="r" style="left:1164.2px;top:1140.8px;width:22.1px;height:21.9px;background:rgb(225,225,228);"></div>
<div class="r" style="left:1185.7px;top:1140.8px;width:22.1px;height:21.9px;background:rgb(218,218,221);"></div>
<div class="r" style="left:1207.3px;top:1140.8px;width:22.1px;height:21.9px;background:rgb(225,225,228);"></div>
<div class="r" style="left:1228.8px;top:1140.8px;width:22.1px;height:21.9px;background:rgb(225,225,228);"></div>
<div class="r" style="left:1250.4px;top:1140.8px;width:22.1px;height:21.9px;background:rgb(225,225,228);"></div>
<div class="r" style="left:1272.0px;top:1140.8px;width:22.1px;height:21.9px;background:rgb(225,225,228);"></div>
<div class="r" style="left:1357.8px;top:1097.8px;width:22.1px;height:21.9px;background:rgb(218,218,221);"></div>
<div class="r" style="left:1379.4px;top:1097.8px;width:22.1px;height:21.9px;background:rgb(210,210,213);"></div>
<div class="r" style="left:1530.6px;top:1097.8px;width:22.1px;height:21.9px;background:rgb(245,245,248);"></div>
<div class="r" style="left:1552.2px;top:1097.8px;width:22.1px;height:21.9px;background:rgb(225,225,228);"></div>
<div class="r" style="left:1573.7px;top:1097.8px;width:22.1px;height:21.9px;background:rgb(199,199,202);"></div>
<div class="r" style="left:1768.0px;top:1097.8px;width:22.1px;height:21.9px;background:rgb(218,218,221);"></div>
<div class="r" style="left:1789.6px;top:1097.8px;width:22.1px;height:21.9px;background:rgb(225,225,228);"></div>
<div class="r" style="left:1811.1px;top:1097.8px;width:22.1px;height:21.9px;background:rgb(210,210,213);"></div>
<div class="r" style="left:1832.7px;top:1097.8px;width:22.1px;height:21.9px;background:rgb(214,214,217);"></div>
<div class="r" style="left:1854.2px;top:1097.8px;width:22.1px;height:21.9px;background:rgb(199,199,202);"></div>
<div class="r" style="left:1875.8px;top:1097.8px;width:22.1px;height:21.9px;background:rgb(207,207,210);"></div>
<div class="r" style="left:1897.4px;top:1097.8px;width:22.1px;height:21.9px;background:rgb(225,225,228);"></div>
<div class="r" style="left:2026.9px;top:1097.8px;width:31.5px;height:21.9px;background:rgb(199,199,202);"></div>
<div class="r" style="left:1140.2px;top:1163.0px;width:918.0px;height:21.0px;background:#fcfcfc;"></div>
<div class="r" style="left:1142.6px;top:1206.0px;width:22.1px;height:21.9px;background:rgb(179,179,182);"></div>
<div class="r" style="left:1164.2px;top:1206.0px;width:22.1px;height:21.9px;background:rgb(187,187,190);"></div>
<div class="r" style="left:1185.7px;top:1206.0px;width:22.1px;height:21.9px;background:rgb(195,195,198);"></div>
<div class="r" style="left:1207.3px;top:1206.0px;width:22.1px;height:21.9px;background:rgb(183,183,186);"></div>
<div class="r" style="left:1228.8px;top:1206.0px;width:22.1px;height:21.9px;background:rgb(218,218,221);"></div>
<div class="r" style="left:1250.4px;top:1206.0px;width:22.1px;height:21.9px;background:rgb(195,195,198);"></div>
<div class="r" style="left:1272.0px;top:1206.0px;width:22.1px;height:21.9px;background:rgb(210,210,213);"></div>
<div class="r" style="left:1357.8px;top:1206.0px;width:22.1px;height:21.9px;background:rgb(230,230,233);"></div>
<div class="r" style="left:1379.4px;top:1206.0px;width:22.1px;height:21.9px;background:rgb(199,199,202);"></div>
<div class="r" style="left:1400.9px;top:1206.0px;width:22.1px;height:21.9px;background:rgb(250,250,253);"></div>
<div class="r" style="left:1530.6px;top:1206.0px;width:22.1px;height:21.9px;background:rgb(240,240,243);"></div>
<div class="r" style="left:1552.2px;top:1206.0px;width:22.1px;height:21.9px;background:rgb(210,210,213);"></div>
<div class="r" style="left:1573.7px;top:1206.0px;width:22.1px;height:21.9px;background:rgb(225,225,228);"></div>
<div class="r" style="left:1595.3px;top:1206.0px;width:22.1px;height:21.9px;background:rgb(240,240,243);"></div>
<div class="r" style="left:1768.0px;top:1206.0px;width:22.1px;height:21.9px;background:rgb(228,228,231);"></div>
<div class="r" style="left:1789.6px;top:1206.0px;width:22.1px;height:21.9px;background:rgb(228,228,231);"></div>
<div class="r" style="left:1811.1px;top:1206.0px;width:22.1px;height:21.9px;background:rgb(207,207,210);"></div>
<div class="r" style="left:1832.7px;top:1206.0px;width:22.1px;height:21.9px;background:rgb(210,210,213);"></div>
<div class="r" style="left:1854.2px;top:1206.0px;width:22.1px;height:21.9px;background:rgb(199,199,202);"></div>
<div class="r" style="left:1875.8px;top:1206.0px;width:22.1px;height:21.9px;background:rgb(207,207,210);"></div>
<div class="r" style="left:1897.4px;top:1206.0px;width:22.1px;height:21.9px;background:rgb(225,225,228);"></div>
<div class="r" style="left:2026.9px;top:1206.0px;width:31.5px;height:21.9px;background:rgb(207,207,210);"></div>
<div class="r" style="left:1142.6px;top:1270.6px;width:22.1px;height:21.9px;background:rgb(214,214,217);"></div>
<div class="r" style="left:1164.2px;top:1270.6px;width:22.1px;height:21.9px;background:rgb(230,230,233);"></div>
<div class="r" style="left:1185.7px;top:1270.6px;width:22.1px;height:21.9px;background:rgb(225,225,228);"></div>
<div class="r" style="left:1207.3px;top:1270.6px;width:22.1px;height:21.9px;background:rgb(225,225,228);"></div>
<div class="r" style="left:1228.8px;top:1270.6px;width:22.1px;height:21.9px;background:rgb(225,225,228);"></div>
<div class="r" style="left:1250.4px;top:1270.6px;width:22.1px;height:21.9px;background:rgb(230,230,233);"></div>
<div class="r" style="left:1272.0px;top:1270.6px;width:22.1px;height:21.9px;background:rgb(222,222,225);"></div>
<div class="r" style="left:1293.5px;top:1270.6px;width:22.1px;height:21.9px;background:rgb(214,214,217);"></div>
<div class="r" style="left:1142.6px;top:1292.2px;width:22.1px;height:21.9px;background:rgb(245,245,248);"></div>
<div class="r" style="left:1164.2px;top:1292.2px;width:22.1px;height:21.9px;background:rgb(235,235,238);"></div>
<div class="r" style="left:1185.7px;top:1292.2px;width:22.1px;height:21.9px;background:rgb(250,250,253);"></div>
<div class="r" style="left:1207.3px;top:1292.2px;width:22.1px;height:21.9px;background:rgb(250,250,253);"></div>
<div class="r" style="left:1228.8px;top:1292.2px;width:22.1px;height:21.9px;background:rgb(250,250,253);"></div>
<div class="r" style="left:1250.4px;top:1292.2px;width:22.1px;height:21.9px;background:rgb(250,250,253);"></div>
<div class="r" style="left:1272.0px;top:1292.2px;width:22.1px;height:21.9px;background:rgb(250,250,253);"></div>
<div class="r" style="left:1293.5px;top:1292.2px;width:22.1px;height:21.9px;background:rgb(250,250,253);"></div>
<div class="r" style="left:1357.8px;top:1270.6px;width:22.1px;height:21.9px;background:rgb(225,225,228);"></div>
<div class="r" style="left:1379.4px;top:1270.6px;width:22.1px;height:21.9px;background:rgb(214,214,217);"></div>
<div class="r" style="left:1357.8px;top:1292.2px;width:22.1px;height:21.9px;background:rgb(245,245,248);"></div>
<div class="r" style="left:1379.4px;top:1292.2px;width:22.1px;height:21.9px;background:rgb(240,240,243);"></div>
<div class="r" style="left:1530.6px;top:1270.6px;width:22.1px;height:21.9px;background:rgb(250,250,253);"></div>
<div class="r" style="left:1552.2px;top:1270.6px;width:22.1px;height:21.9px;background:rgb(218,218,221);"></div>
<div class="r" style="left:1573.7px;top:1270.6px;width:22.1px;height:21.9px;background:rgb(218,218,221);"></div>
<div class="r" style="left:1595.3px;top:1270.6px;width:22.1px;height:21.9px;background:rgb(245,245,248);"></div>
<div class="r" style="left:1768.0px;top:1270.6px;width:22.1px;height:21.9px;background:rgb(225,225,228);"></div>
<div class="r" style="left:1789.6px;top:1270.6px;width:22.1px;height:21.9px;background:rgb(235,235,238);"></div>
<div class="r" style="left:1811.1px;top:1270.6px;width:22.1px;height:21.9px;background:rgb(225,225,228);"></div>
<div class="r" style="left:1832.7px;top:1270.6px;width:22.1px;height:21.9px;background:rgb(222,222,225);"></div>
<div class="r" style="left:1854.2px;top:1270.6px;width:22.1px;height:21.9px;background:rgb(210,210,213);"></div>
<div class="r" style="left:1875.8px;top:1270.6px;width:22.1px;height:21.9px;background:rgb(214,214,217);"></div>
<div class="r" style="left:1897.4px;top:1270.6px;width:22.1px;height:21.9px;background:rgb(230,230,233);"></div>
<div class="r" style="left:1768.0px;top:1292.2px;width:22.1px;height:21.9px;background:rgb(250,250,253);"></div>
<div class="r" style="left:1789.6px;top:1292.2px;width:22.1px;height:21.9px;background:rgb(248,248,251);"></div>
<div class="r" style="left:1811.1px;top:1292.2px;width:22.1px;height:21.9px;background:rgb(245,245,248);"></div>
<div class="r" style="left:1832.7px;top:1292.2px;width:22.1px;height:21.9px;background:rgb(245,245,248);"></div>
<div class="r" style="left:1854.2px;top:1292.2px;width:22.1px;height:21.9px;background:rgb(245,245,248);"></div>
<div class="r" style="left:1875.8px;top:1292.2px;width:22.1px;height:21.9px;background:rgb(250,250,253);"></div>
<div class="r" style="left:1897.4px;top:1292.2px;width:22.1px;height:21.9px;background:rgb(250,250,253);"></div>
<div class="r" style="left:2026.9px;top:1270.6px;width:31.5px;height:21.9px;background:rgb(210,210,213);"></div>
<div class="r" style="left:2026.9px;top:1292.2px;width:31.5px;height:21.9px;background:rgb(240,240,243);"></div>
<div class="r" style="left:1142.6px;top:1313.6px;width:22.1px;height:12.8px;background:rgb(232,232,235);"></div>
<div class="r" style="left:1164.2px;top:1313.6px;width:22.1px;height:12.8px;background:rgb(232,232,235);"></div>
<div class="r" style="left:1185.7px;top:1313.6px;width:22.1px;height:12.8px;background:rgb(236,236,239);"></div>
<div class="r" style="left:1207.3px;top:1313.6px;width:22.1px;height:12.8px;background:rgb(236,236,239);"></div>
<div class="r" style="left:1228.8px;top:1313.6px;width:22.1px;height:12.8px;background:rgb(242,242,245);"></div>
<div class="r" style="left:1250.4px;top:1313.6px;width:22.1px;height:12.8px;background:rgb(244,244,247);"></div>
<div class="r" style="left:1272.0px;top:1313.6px;width:22.1px;height:12.8px;background:rgb(244,244,247);"></div>
<div class="r" style="left:1293.5px;top:1313.6px;width:22.1px;height:12.8px;background:rgb(244,244,247);"></div>
<div class="r" style="left:1315.1px;top:1313.6px;width:22.1px;height:12.8px;background:rgb(244,244,247);"></div>
<div class="r" style="left:1336.6px;top:1313.6px;width:22.1px;height:12.8px;background:rgb(244,244,247);"></div>
<div class="r" style="left:1358.2px;top:1313.6px;width:22.1px;height:12.8px;background:rgb(244,244,247);"></div>
<div class="r" style="left:1379.8px;top:1313.6px;width:22.1px;height:12.8px;background:rgb(244,244,247);"></div>
<div class="r" style="left:1401.3px;top:1313.6px;width:22.1px;height:12.8px;background:rgb(244,244,247);"></div>
<div class="r" style="left:1422.9px;top:1313.6px;width:22.1px;height:12.8px;background:rgb(244,244,247);"></div>
<div class="r" style="left:1444.4px;top:1313.6px;width:22.1px;height:12.8px;background:rgb(244,244,247);"></div>
<div class="r" style="left:1466.0px;top:1313.6px;width:22.1px;height:12.8px;background:rgb(244,244,247);"></div>
<div class="r" style="left:1487.6px;top:1313.6px;width:22.1px;height:12.8px;background:rgb(244,244,247);"></div>
<div class="r" style="left:1509.1px;top:1313.6px;width:22.1px;height:12.8px;background:rgb(244,244,247);"></div>
<div class="r" style="left:1530.7px;top:1313.6px;width:22.1px;height:12.8px;background:rgb(244,244,247);"></div>
<div class="r" style="left:1552.2px;top:1313.6px;width:22.1px;height:12.8px;background:rgb(244,244,247);"></div>
<div class="r" style="left:1573.8px;top:1313.6px;width:22.1px;height:12.8px;background:rgb(244,244,247);"></div>
<div class="r" style="left:1595.4px;top:1313.6px;width:22.1px;height:12.8px;background:rgb(244,244,247);"></div>
<div class="r" style="left:1616.9px;top:1313.6px;width:22.1px;height:12.8px;background:rgb(244,244,247);"></div>
<div class="r" style="left:1638.5px;top:1313.6px;width:22.1px;height:12.8px;background:rgb(244,244,247);"></div>
<div class="r" style="left:1660.0px;top:1313.6px;width:22.1px;height:12.8px;background:rgb(244,244,247);"></div>
<div class="r" style="left:1681.6px;top:1313.6px;width:22.1px;height:12.8px;background:rgb(244,244,247);"></div>
<div class="r" style="left:1703.2px;top:1313.6px;width:22.1px;height:12.8px;background:rgb(244,244,247);"></div>
<div class="r" style="left:1724.7px;top:1313.6px;width:22.1px;height:12.8px;background:rgb(244,244,247);"></div>
<div class="r" style="left:1746.3px;top:1313.6px;width:22.1px;height:12.8px;background:rgb(244,244,247);"></div>
<div class="r" style="left:1767.8px;top:1313.6px;width:22.1px;height:12.8px;background:rgb(244,244,247);"></div>
<div class="r" style="left:1789.4px;top:1313.6px;width:22.1px;height:12.8px;background:rgb(244,244,247);"></div>
<div class="r" style="left:1811.0px;top:1313.6px;width:22.1px;height:12.8px;background:rgb(244,244,247);"></div>
<div class="r" style="left:1832.5px;top:1313.6px;width:22.1px;height:12.8px;background:rgb(244,244,247);"></div>
<div class="r" style="left:1854.1px;top:1313.6px;width:22.1px;height:12.8px;background:rgb(244,244,247);"></div>
<div class="r" style="left:1875.6px;top:1313.6px;width:22.1px;height:12.8px;background:rgb(244,244,247);"></div>
<div class="r" style="left:1897.2px;top:1313.6px;width:22.1px;height:12.8px;background:rgb(244,244,247);"></div>
<div class="r" style="left:1918.8px;top:1313.6px;width:22.1px;height:12.8px;background:rgb(244,244,247);"></div>
<div class="r" style="left:1940.3px;top:1313.6px;width:22.1px;height:12.8px;background:rgb(244,244,247);"></div>
<div class="r" style="left:1961.9px;top:1313.6px;width:22.1px;height:12.8px;background:rgb(244,244,247);"></div>
<div class="r" style="left:1983.4px;top:1313.6px;width:22.1px;height:12.8px;background:rgb(244,244,247);"></div>
<div class="r" style="left:2005.0px;top:1313.6px;width:22.1px;height:12.8px;background:rgb(244,244,247);"></div>
<div class="r" style="left:2026.6px;top:1313.6px;width:22.1px;height:12.8px;background:rgb(244,244,247);"></div>
<div class="r" style="left:2068.5px;top:819.0px;width:425.5px;height:503.0px;background:#ffffff;border:1px solid #e6e6e6;box-sizing:border-box;border-radius:0 4px 4px 0;box-shadow:0 1.5px 3px rgba(0,0,0,0.10)"></div>
<div class="r" style="left:2068.5px;top:819.0px;width:1.5px;height:503.0px;background:#e3e3e3;"></div>
<svg style="left:2098.5px;top:842px" width="28" height="32" viewBox="0 0 28 32"><path d="M2 2 H16.5 L24.5 10 V29.5 H2Z M16.5 2 V10 H24.5" fill="none" stroke="#555" stroke-width="1.9" stroke-linejoin="miter"/><path d="M6.5 18 H19.5 M6.5 22 H19.5 M6.5 26 H19.5" stroke="#555" stroke-width="1.8"/></svg>
<svg style="left:2130px;top:840px" width="30" height="40"><path d="M12.2 32 L21.2 10" stroke="#1f6fc5" stroke-width="1.9" stroke-linecap="round"/></svg>
<svg style="left:2096px;top:906px" width="32" height="32" viewBox="0 0 32 32"><circle cx="16" cy="15" r="14.2" fill="#218a2b"/><path d="M9.5 15.5 L14 19.5 L22 11.5" fill="none" stroke="#fff" stroke-width="2.6"/></svg>
<div class="t" style="left:2134.2px;top:910.9px;font-size:27.5px;color:#323130;font-weight:400;">Geïndexeerd</div>
<div class="t" style="left:2099px;top:965.1px;font-size:24px;color:#605e5c;font-weight:400;">Indrukken</div>
<div class="t" style="left:2275px;top:965.1px;font-size:24px;color:#605e5c;font-weight:400;">:</div>
<div class="t" style="left:2099px;top:1006.2px;font-size:24px;color:#605e5c;font-weight:400;">Klikken</div>
<div class="t" style="left:2275px;top:1006.2px;font-size:24px;color:#605e5c;font-weight:400;">:</div>
<div class="t" style="left:2099px;top:1048.2px;font-size:24px;color:#605e5c;font-weight:400;">Laatste gecrawld:</div>
<div class="t" style="left:2099px;top:1089.3px;font-size:24px;color:#605e5c;font-weight:400;">Ontdekt</div>
<div class="t" style="left:2275px;top:1089.3px;font-size:24px;color:#605e5c;font-weight:400;">:</div>
<div class="t" style="left:2099px;top:1131.2px;font-size:24px;color:#605e5c;font-weight:400;">HTTP-code</div>
<div class="t" style="left:2275px;top:1131.2px;font-size:24px;color:#605e5c;font-weight:400;">:</div>
<div class="t" style="left:2099px;top:1173.2px;font-size:24px;color:#605e5c;font-weight:400;">Documentgrootte:</div>
<div class="t" style="left:2099px;top:1214.7px;font-size:24px;color:#605e5c;font-weight:400;">Terugverwijzingen:</div>
<div class="t" style="left:2099px;top:1255.7px;font-size:24px;color:#605e5c;font-weight:400;">Is Https</div>
<div class="t" style="left:2275px;top:1255.7px;font-size:24px;color:#605e5c;font-weight:400;">:</div>
<div class="r" style="left:2286.0px;top:965.3px;width:11.4px;height:13.5px;background:rgb(248,248,248);"></div>
<div class="r" style="left:2297.4px;top:965.3px;width:21.9px;height:13.8px;background:rgb(195,195,198);"></div>
<div class="r" style="left:2318.8px;top:965.3px;width:21.9px;height:13.8px;background:rgb(220,220,223);"></div>
<div class="r" style="left:2340.3px;top:965.3px;width:21.9px;height:13.8px;background:rgb(238,238,241);"></div>
<div class="r" style="left:2286.0px;top:1001.0px;width:11.4px;height:21.2px;background:rgb(240,240,240);"></div>
<div class="r" style="left:2297.4px;top:1001.0px;width:21.9px;height:21.5px;background:rgb(228,228,231);"></div>
<div class="r" style="left:2318.8px;top:1001.0px;width:21.9px;height:21.5px;background:rgb(198,198,201);"></div>
<div class="r" style="left:2286.0px;top:1022.2px;width:11.4px;height:10.4px;background:rgb(240,240,240);"></div>
<div class="r" style="left:2297.4px;top:1022.2px;width:21.9px;height:10.7px;background:rgb(215,215,218);"></div>
<div class="r" style="left:2318.8px;top:1022.2px;width:21.9px;height:10.7px;background:rgb(215,215,218);"></div>
<div class="r" style="left:2286.0px;top:1032.6px;width:11.4px;height:22.2px;background:rgb(248,248,248);"></div>
<div class="r" style="left:2297.4px;top:1032.6px;width:21.9px;height:22.5px;background:rgb(238,238,241);"></div>
<div class="r" style="left:2318.8px;top:1032.6px;width:21.9px;height:22.5px;background:rgb(255,255,255);"></div>
<div class="r" style="left:2340.3px;top:1032.6px;width:21.9px;height:22.5px;background:rgb(255,255,255);"></div>
<div class="r" style="left:2361.8px;top:1032.6px;width:21.9px;height:22.5px;background:rgb(252,252,255);"></div>
<div class="r" style="left:2383.2px;top:1032.6px;width:21.9px;height:22.5px;background:rgb(230,230,233);"></div>
<div class="r" style="left:2404.7px;top:1032.6px;width:21.9px;height:22.5px;background:rgb(230,230,233);"></div>
<div class="r" style="left:2286.0px;top:1054.8px;width:11.4px;height:21.4px;background:rgb(238,238,238);"></div>
<div class="r" style="left:2297.4px;top:1054.8px;width:21.9px;height:21.7px;background:rgb(236,236,239);"></div>
<div class="r" style="left:2318.8px;top:1054.8px;width:21.9px;height:21.7px;background:rgb(238,238,241);"></div>
<div class="r" style="left:2340.3px;top:1054.8px;width:21.9px;height:21.7px;background:rgb(215,215,218);"></div>
<div class="r" style="left:2361.8px;top:1054.8px;width:21.9px;height:21.7px;background:rgb(236,236,239);"></div>
<div class="r" style="left:2383.2px;top:1054.8px;width:21.9px;height:21.7px;background:rgb(220,220,223);"></div>
<div class="r" style="left:2404.7px;top:1054.8px;width:21.9px;height:21.7px;background:rgb(230,230,233);"></div>
<div class="r" style="left:2286.0px;top:1076.2px;width:11.4px;height:21.8px;background:rgb(252,252,252);"></div>
<div class="r" style="left:2297.4px;top:1076.2px;width:21.9px;height:22.1px;background:rgb(250,250,253);"></div>
<div class="r" style="left:2318.8px;top:1076.2px;width:21.9px;height:22.1px;background:rgb(252,252,255);"></div>
<div class="r" style="left:2340.3px;top:1076.2px;width:21.9px;height:22.1px;background:rgb(248,248,251);"></div>
<div class="r" style="left:2361.8px;top:1076.2px;width:21.9px;height:22.1px;background:rgb(228,228,231);"></div>
<div class="r" style="left:2383.2px;top:1076.2px;width:21.9px;height:22.1px;background:rgb(228,228,231);"></div>
<div class="r" style="left:2404.7px;top:1076.2px;width:21.9px;height:22.1px;background:rgb(255,255,255);"></div>
<div class="r" style="left:2286.0px;top:1098.0px;width:11.4px;height:21.0px;background:rgb(250,250,250);"></div>
<div class="r" style="left:2297.4px;top:1098.0px;width:21.9px;height:21.3px;background:rgb(236,236,239);"></div>
<div class="r" style="left:2318.8px;top:1098.0px;width:21.9px;height:21.3px;background:rgb(222,222,225);"></div>
<div class="r" style="left:2340.3px;top:1098.0px;width:21.9px;height:21.3px;background:rgb(240,240,243);"></div>
<div class="r" style="left:2361.8px;top:1098.0px;width:21.9px;height:21.3px;background:rgb(228,228,231);"></div>
<div class="r" style="left:2383.2px;top:1098.0px;width:21.9px;height:21.3px;background:rgb(240,240,243);"></div>
<div class="r" style="left:2404.7px;top:1098.0px;width:21.9px;height:21.3px;background:rgb(252,252,255);"></div>
<div class="r" style="left:2286.0px;top:1119.0px;width:11.4px;height:22.0px;background:rgb(250,250,250);"></div>
<div class="r" style="left:2297.4px;top:1119.0px;width:21.9px;height:22.3px;background:rgb(210,210,213);"></div>
<div class="r" style="left:2318.8px;top:1119.0px;width:21.9px;height:22.3px;background:rgb(232,232,235);"></div>
<div class="r" style="left:2286.0px;top:1141.0px;width:11.4px;height:18.6px;background:rgb(242,242,242);"></div>
<div class="r" style="left:2297.4px;top:1141.0px;width:21.9px;height:18.9px;background:rgb(232,232,235);"></div>
<div class="r" style="left:2318.8px;top:1141.0px;width:21.9px;height:18.9px;background:rgb(242,242,245);"></div>
<div class="r" style="left:2318.8px;top:1172.0px;width:21.9px;height:11.3px;background:rgb(225,225,228);"></div>
<div class="r" style="left:2340.2px;top:1172.0px;width:21.9px;height:11.3px;background:rgb(232,232,235);"></div>
<div class="r" style="left:2361.7px;top:1172.0px;width:21.9px;height:11.3px;background:rgb(212,212,215);"></div>
<div class="r" style="left:2383.2px;top:1172.0px;width:21.9px;height:11.3px;background:rgb(222,222,225);"></div>
<div class="r" style="left:2300.8px;top:1172.0px;width:18.0px;height:11.0px;background:rgb(250,250,250);"></div>
<div class="r" style="left:2318.8px;top:1183.0px;width:21.9px;height:22.3px;background:rgb(235,235,238);"></div>
<div class="r" style="left:2340.2px;top:1183.0px;width:21.9px;height:22.3px;background:rgb(245,245,248);"></div>
<div class="r" style="left:2361.7px;top:1183.0px;width:21.9px;height:22.3px;background:rgb(248,248,251);"></div>
<div class="r" style="left:2383.2px;top:1183.0px;width:21.9px;height:22.3px;background:rgb(240,240,243);"></div>
<div class="r" style="left:2300.8px;top:1183.0px;width:18.0px;height:22.0px;background:rgb(252,252,252);"></div>
<div class="r" style="left:2318.8px;top:1205.0px;width:21.9px;height:21.9px;background:rgb(205,205,208);"></div>
<div class="r" style="left:2340.2px;top:1205.0px;width:21.9px;height:21.9px;background:rgb(215,215,218);"></div>
<div class="r" style="left:2361.7px;top:1205.0px;width:21.9px;height:21.9px;background:rgb(242,242,245);"></div>
<div class="r" style="left:2300.8px;top:1205.0px;width:18.0px;height:21.6px;background:rgb(250,250,250);"></div>
<div class="r" style="left:2318.8px;top:1226.6px;width:21.9px;height:18.3px;background:rgb(248,248,251);"></div>
<div class="r" style="left:2340.2px;top:1226.6px;width:21.9px;height:18.3px;background:rgb(252,252,255);"></div>
<div class="r" style="left:2361.7px;top:1226.6px;width:21.9px;height:18.3px;background:rgb(252,252,255);"></div>
<div class="r" style="left:2286.0px;top:1250.8px;width:11.4px;height:19.0px;background:rgb(244,244,244);"></div>
<div class="r" style="left:2297.4px;top:1250.8px;width:21.9px;height:19.3px;background:rgb(225,225,228);"></div>
<div class="r" style="left:2318.8px;top:1250.8px;width:21.9px;height:19.3px;background:rgb(220,220,223);"></div>
<svg style="left:0;top:0" width="2560" height="1378"><path d="M937.3 687.6 L1071.8 833.2 L1064.5 836.3 L1095.2 847.8 L1085.0 817.2 L1081.2 823.3 L938.7 685.9Z" fill="#ff0000" stroke="#ff0000" stroke-width="2.2" stroke-linejoin="round"/></svg>
<div class="r" style="left:0.0px;top:1318.0px;width:424.0px;height:60.0px;background:linear-gradient(to bottom, rgba(0,0,0,0) 0px, rgba(0,0,0,0.075) 60px);-webkit-mask-image:linear-gradient(to right, rgba(0,0,0,0.15) 0px, #000 380px)"></div>
<div class="r" style="left:424.0px;top:1318.0px;width:2136.0px;height:60.0px;background:linear-gradient(to bottom, rgba(0,0,0,0) 0px, rgba(0,0,0,0.09) 60px);"></div>
</body></html>
